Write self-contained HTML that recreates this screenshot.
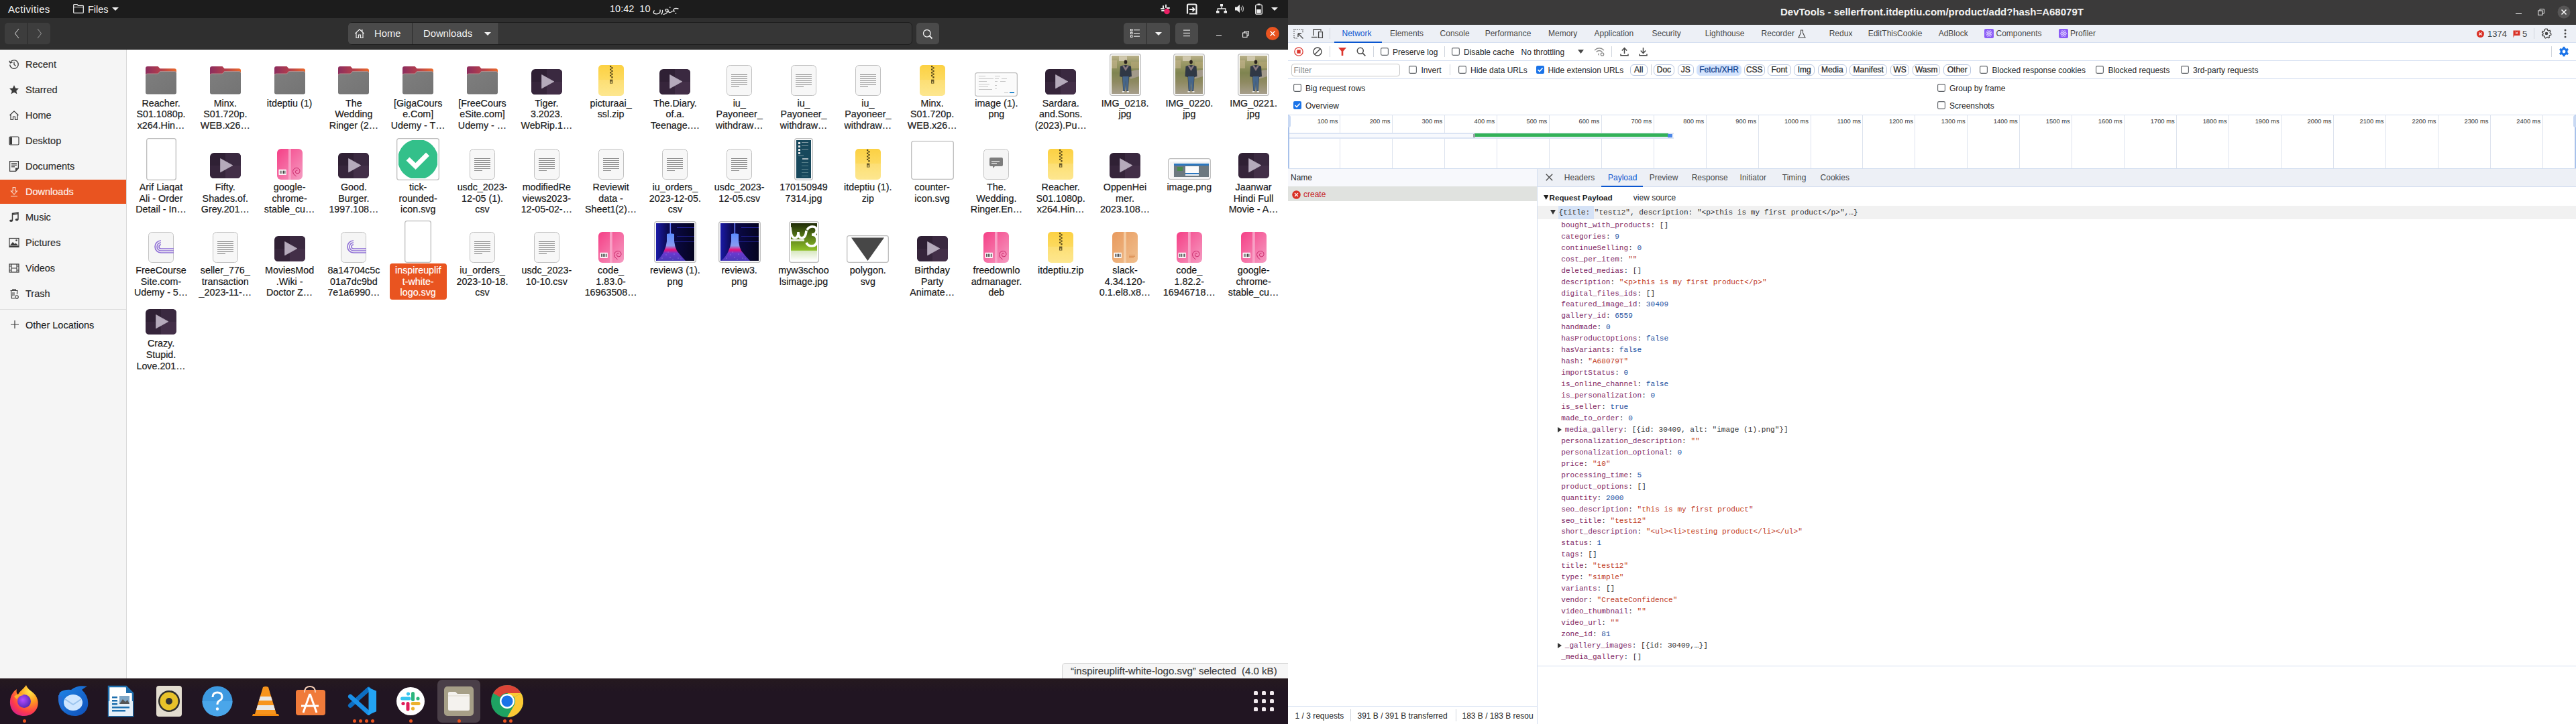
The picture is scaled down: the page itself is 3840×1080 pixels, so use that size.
<!DOCTYPE html><html><head><meta charset="utf-8"><style>
*{margin:0;padding:0}
html,body{width:3840px;height:1080px;overflow:hidden;background:#fff;position:relative}
body{font-family:"Liberation Sans",sans-serif}
.ic{position:absolute;line-height:0}
.ic svg{display:block}
.lb{position:absolute;width:90px;text-align:center;font-size:14.3px;line-height:16.8px;color:#1a1a1a;white-space:nowrap;-webkit-text-stroke:0.2px #1a1a1a}
.lb.sel{-webkit-text-stroke:0.2px #fff}
.lb.sel{color:#fff}
.sbt{position:absolute;font-size:14.5px;line-height:18px;color:#1e1e1e;white-space:nowrap;-webkit-text-stroke:0.15px currentColor}
.tb{position:absolute;font-size:14.5px;line-height:18px;color:#f4f4f4;white-space:nowrap}
.hbt{position:absolute;font-size:14.8px;line-height:18px;color:#f0f0f0;white-space:nowrap}
.hbtn{position:absolute;background:#3d3d3d;border-radius:5px}
.ttl{position:absolute;font-size:15px;font-weight:bold;line-height:18px;color:#f2f2f2;white-space:nowrap}
.dt{position:absolute;font-size:12px;line-height:16px;color:#1f1f1f;white-space:nowrap}
.dtab{position:absolute;font-size:12px;line-height:16px;color:#474747;white-space:nowrap}
.dtb{position:absolute;font-size:11.7px;font-weight:bold;line-height:16px;color:#1f1f1f;white-space:nowrap}
.tml{position:absolute;width:60px;text-align:right;font-size:9.4px;line-height:12px;color:#333;white-space:nowrap}
.chip{position:absolute;top:95.5px;height:17px;box-sizing:border-box;border:1px solid #b8c6e0;border-radius:6px;font-size:12px;line-height:15px;text-align:center;color:#1f1f1f;-webkit-text-stroke:0.25px currentColor}
.mono{position:absolute;font-family:"Liberation Mono",monospace;font-size:11.1px;line-height:17px;white-space:pre;color:#303030}
</style></head><body>
<div style="position:absolute;left:189px;top:74px;width:1731px;height:938px;background:#fff"></div>
<div style="position:absolute;left:0;top:74px;width:188px;height:938px;background:#f5f5f5"></div>
<div style="position:absolute;left:188px;top:74px;width:1px;height:938px;background:#d8d8d8"></div>
<div style="position:absolute;left:581px;top:393px;width:84.5px;height:53.6px;background:#e95420;border-radius:4px"></div>
<div class="ic" style="left:13px;top:88px"><svg width="16" height="16" viewBox="0 0 16 16"><path d="M2.2 5.5 A6.3 6.3 0 1 1 1.7 8.5" fill="none" stroke="#3b3b3b" stroke-width="1.3"/><path d="M0.8 2.8 L2.4 6 L5.6 4.8" fill="none" stroke="#3b3b3b" stroke-width="1.3"/><path d="M8 4.2 V8.3 L10.5 10.5" fill="none" stroke="#3b3b3b" stroke-width="1.3"/></svg></div>
<div class="sbt" style="left:38px;top:87px;color:#2b2b2b">Recent</div>
<div class="ic" style="left:13px;top:126px"><svg width="16" height="16" viewBox="0 0 16 16"><path d="M8 1 L10.1 5.6 L15 6.1 L11.3 9.4 L12.4 14.3 L8 11.8 L3.6 14.3 L4.7 9.4 L1 6.1 L5.9 5.6Z" fill="#3b3b3b"/></svg></div>
<div class="sbt" style="left:38px;top:125px;color:#2b2b2b">Starred</div>
<div class="ic" style="left:13px;top:164px"><svg width="16" height="16" viewBox="0 0 16 16"><path d="M1.5 8 L8 1.8 L14.5 8 M3 6.8 V14.5 H6.5 V10 H9.5 V14.5 H13 V6.8" fill="none" stroke="#3b3b3b" stroke-width="1.2"/></svg></div>
<div class="sbt" style="left:38px;top:163px;color:#2b2b2b">Home</div>
<div class="ic" style="left:13px;top:202px"><svg width="16" height="16" viewBox="0 0 16 16"><rect x="1" y="2" width="14" height="12" rx="1.5" fill="none" stroke="#3b3b3b" stroke-width="1.2"/><rect x="1.5" y="2.5" width="3.5" height="11" fill="#3b3b3b"/></svg></div>
<div class="sbt" style="left:38px;top:201px;color:#2b2b2b">Desktop</div>
<div class="ic" style="left:13px;top:240px"><svg width="16" height="16" viewBox="0 0 16 16"><path d="M1.6 0.6 H14.4 V11 L10.6 15.4 H1.6Z" fill="none" stroke="#3b3b3b" stroke-width="1.2"/><path d="M10 15.4 V10.5 H14.4Z" fill="#3b3b3b"/><g fill="#3b3b3b"><rect x="4" y="3" width="8" height="1.2"/><rect x="4" y="5.6" width="8" height="1.2"/><rect x="4" y="8.2" width="5" height="1.2"/></g></svg></div>
<div class="sbt" style="left:38px;top:239px;color:#2b2b2b">Documents</div>
<div style="position:absolute;left:0;top:268px;width:188px;height:36px;background:#e95420"></div>
<div class="ic" style="left:13px;top:278px"><svg width="16" height="16" viewBox="0 0 16 16"><path d="M6.2 1.5 H9.8 V7 H12.5 L8 12 L3.5 7 H6.2Z" fill="none" stroke="#f9e0d3" stroke-width="1.1"/><rect x="3" y="14" width="10" height="1.1" fill="#f9e0d3"/></svg></div>
<div class="sbt" style="left:38px;top:277px;color:#fdf1ea">Downloads</div>
<div class="ic" style="left:13px;top:316px"><svg width="16" height="16" viewBox="0 0 16 16"><path d="M5.5 13 V2.5 L14 1.2 V11.5" fill="none" stroke="#3b3b3b" stroke-width="1.5"/><ellipse cx="3.6" cy="13.2" rx="2.4" ry="1.8" fill="#3b3b3b"/><ellipse cx="12.1" cy="11.8" rx="2.4" ry="1.8" fill="#3b3b3b"/><path d="M5.5 4 L14 2.7" stroke="#3b3b3b" stroke-width="1.5"/></svg></div>
<div class="sbt" style="left:38px;top:315px;color:#2b2b2b">Music</div>
<div class="ic" style="left:13px;top:354px"><svg width="16" height="16" viewBox="0 0 16 16"><rect x="1" y="1.5" width="14" height="13" fill="none" stroke="#3b3b3b" stroke-width="1.2"/><path d="M2 12 L6 7 L9 10 L10.5 8.5 L14 12Z" fill="#3b3b3b"/><circle cx="11.5" cy="4.5" r="1.3" fill="#3b3b3b"/><rect x="1" y="12.5" width="14" height="2.3" fill="#3b3b3b"/></svg></div>
<div class="sbt" style="left:38px;top:353px;color:#2b2b2b">Pictures</div>
<div class="ic" style="left:13px;top:392px"><svg width="16" height="16" viewBox="0 0 16 16"><rect x="1" y="2" width="14" height="12" fill="none" stroke="#3b3b3b" stroke-width="1.2"/><path d="M4 2 V14 M12 2 V14 M4 8 H12" stroke="#3b3b3b" stroke-width="1.1"/><g fill="#3b3b3b"><rect x="1" y="4.5" width="3" height="1"/><rect x="1" y="10.5" width="3" height="1"/><rect x="12" y="4.5" width="3" height="1"/><rect x="12" y="10.5" width="3" height="1"/></g></svg></div>
<div class="sbt" style="left:38px;top:391px;color:#2b2b2b">Videos</div>
<div class="ic" style="left:13px;top:430px"><svg width="16" height="16" viewBox="0 0 16 16"><path d="M2.5 3.5 H13.5 M6 3.5 V1.5 H10 V3.5 M3.5 3.5 L4.3 15 H9" fill="none" stroke="#3b3b3b" stroke-width="1.2"/><path d="M12.7 3.5 L12.4 9" stroke="#3b3b3b" stroke-width="1.2"/><path d="M6 6 V12 M8 6 V11" stroke="#3b3b3b" stroke-width="1"/><circle cx="12" cy="13" r="2.3" fill="none" stroke="#3b3b3b" stroke-width="1.1"/></svg></div>
<div class="sbt" style="left:38px;top:429px;color:#2b2b2b">Trash</div>
<div style="position:absolute;left:0;top:461px;width:188px;height:1px;background:#dcdcdc"></div>
<div class="ic" style="left:15px;top:477px"><svg width="14" height="14" viewBox="0 0 14 14"><path d="M7 1 V13 M1 7 H13" stroke="#3b3b3b" stroke-width="1.2"/></svg></div>
<div class="sbt" style="left:38px;top:476px">Other Locations</div>
<div class="ic" style="left:217px;top:99px"><svg width="46" height="42" viewBox="0 0 46 42"><defs>
<linearGradient id="ftab" x1="0" y1="0" x2="1" y2="0"><stop offset="0" stop-color="#8c2d5e"/><stop offset="0.5" stop-color="#b63f4c"/><stop offset="1" stop-color="#ea6a2c"/></linearGradient>
<linearGradient id="fbody" x1="0" y1="0" x2="1" y2="1"><stop offset="0" stop-color="#7e7e7e"/><stop offset="1" stop-color="#747474"/></linearGradient></defs>
<path d="M0 3 Q0 0 3 0 H18.5 L21.5 3.3 H43 Q46 3.3 46 6.3 V20 H0Z" fill="url(#ftab)"/>
<path d="M0 13.3 Q0 10.8 2.5 10.8 H18.5 L21.5 7.3 H43.5 Q46 7.3 46 9.8 V38.8 Q46 41.5 43.3 41.5 H2.7 Q0 41.5 0 38.8Z" fill="url(#fbody)"/>
<path d="M0.3 13.3 Q0.3 11 2.5 11 H18.5 L21.5 7.5 H43.5 Q45.7 7.5 45.7 9.8" fill="none" stroke="#d7a0a0" stroke-width="0.7" opacity="0.8"/>
</svg></div>
<div class="lb" style="left:195.0px;top:145.7px">Reacher.<br>S01.1080p.<br>x264.Hin…</div>
<div class="ic" style="left:313px;top:99px"><svg width="46" height="42" viewBox="0 0 46 42"><defs>
<linearGradient id="ftab" x1="0" y1="0" x2="1" y2="0"><stop offset="0" stop-color="#8c2d5e"/><stop offset="0.5" stop-color="#b63f4c"/><stop offset="1" stop-color="#ea6a2c"/></linearGradient>
<linearGradient id="fbody" x1="0" y1="0" x2="1" y2="1"><stop offset="0" stop-color="#7e7e7e"/><stop offset="1" stop-color="#747474"/></linearGradient></defs>
<path d="M0 3 Q0 0 3 0 H18.5 L21.5 3.3 H43 Q46 3.3 46 6.3 V20 H0Z" fill="url(#ftab)"/>
<path d="M0 13.3 Q0 10.8 2.5 10.8 H18.5 L21.5 7.3 H43.5 Q46 7.3 46 9.8 V38.8 Q46 41.5 43.3 41.5 H2.7 Q0 41.5 0 38.8Z" fill="url(#fbody)"/>
<path d="M0.3 13.3 Q0.3 11 2.5 11 H18.5 L21.5 7.5 H43.5 Q45.7 7.5 45.7 9.8" fill="none" stroke="#d7a0a0" stroke-width="0.7" opacity="0.8"/>
</svg></div>
<div class="lb" style="left:290.8px;top:145.7px">Minx.<br>S01.720p.<br>WEB.x26…</div>
<div class="ic" style="left:409px;top:99px"><svg width="46" height="42" viewBox="0 0 46 42"><defs>
<linearGradient id="ftab" x1="0" y1="0" x2="1" y2="0"><stop offset="0" stop-color="#8c2d5e"/><stop offset="0.5" stop-color="#b63f4c"/><stop offset="1" stop-color="#ea6a2c"/></linearGradient>
<linearGradient id="fbody" x1="0" y1="0" x2="1" y2="1"><stop offset="0" stop-color="#7e7e7e"/><stop offset="1" stop-color="#747474"/></linearGradient></defs>
<path d="M0 3 Q0 0 3 0 H18.5 L21.5 3.3 H43 Q46 3.3 46 6.3 V20 H0Z" fill="url(#ftab)"/>
<path d="M0 13.3 Q0 10.8 2.5 10.8 H18.5 L21.5 7.3 H43.5 Q46 7.3 46 9.8 V38.8 Q46 41.5 43.3 41.5 H2.7 Q0 41.5 0 38.8Z" fill="url(#fbody)"/>
<path d="M0.3 13.3 Q0.3 11 2.5 11 H18.5 L21.5 7.5 H43.5 Q45.7 7.5 45.7 9.8" fill="none" stroke="#d7a0a0" stroke-width="0.7" opacity="0.8"/>
</svg></div>
<div class="lb" style="left:386.6px;top:145.7px">itdeptiu (1)</div>
<div class="ic" style="left:504px;top:99px"><svg width="46" height="42" viewBox="0 0 46 42"><defs>
<linearGradient id="ftab" x1="0" y1="0" x2="1" y2="0"><stop offset="0" stop-color="#8c2d5e"/><stop offset="0.5" stop-color="#b63f4c"/><stop offset="1" stop-color="#ea6a2c"/></linearGradient>
<linearGradient id="fbody" x1="0" y1="0" x2="1" y2="1"><stop offset="0" stop-color="#7e7e7e"/><stop offset="1" stop-color="#747474"/></linearGradient></defs>
<path d="M0 3 Q0 0 3 0 H18.5 L21.5 3.3 H43 Q46 3.3 46 6.3 V20 H0Z" fill="url(#ftab)"/>
<path d="M0 13.3 Q0 10.8 2.5 10.8 H18.5 L21.5 7.3 H43.5 Q46 7.3 46 9.8 V38.8 Q46 41.5 43.3 41.5 H2.7 Q0 41.5 0 38.8Z" fill="url(#fbody)"/>
<path d="M0.3 13.3 Q0.3 11 2.5 11 H18.5 L21.5 7.5 H43.5 Q45.7 7.5 45.7 9.8" fill="none" stroke="#d7a0a0" stroke-width="0.7" opacity="0.8"/>
</svg></div>
<div class="lb" style="left:482.4px;top:145.7px">The<br>Wedding<br>Ringer (2…</div>
<div class="ic" style="left:600px;top:99px"><svg width="46" height="42" viewBox="0 0 46 42"><defs>
<linearGradient id="ftab" x1="0" y1="0" x2="1" y2="0"><stop offset="0" stop-color="#8c2d5e"/><stop offset="0.5" stop-color="#b63f4c"/><stop offset="1" stop-color="#ea6a2c"/></linearGradient>
<linearGradient id="fbody" x1="0" y1="0" x2="1" y2="1"><stop offset="0" stop-color="#7e7e7e"/><stop offset="1" stop-color="#747474"/></linearGradient></defs>
<path d="M0 3 Q0 0 3 0 H18.5 L21.5 3.3 H43 Q46 3.3 46 6.3 V20 H0Z" fill="url(#ftab)"/>
<path d="M0 13.3 Q0 10.8 2.5 10.8 H18.5 L21.5 7.3 H43.5 Q46 7.3 46 9.8 V38.8 Q46 41.5 43.3 41.5 H2.7 Q0 41.5 0 38.8Z" fill="url(#fbody)"/>
<path d="M0.3 13.3 Q0.3 11 2.5 11 H18.5 L21.5 7.5 H43.5 Q45.7 7.5 45.7 9.8" fill="none" stroke="#d7a0a0" stroke-width="0.7" opacity="0.8"/>
</svg></div>
<div class="lb" style="left:578.2px;top:145.7px">[GigaCours<br>e.Com]<br>Udemy - T…</div>
<div class="ic" style="left:696px;top:99px"><svg width="46" height="42" viewBox="0 0 46 42"><defs>
<linearGradient id="ftab" x1="0" y1="0" x2="1" y2="0"><stop offset="0" stop-color="#8c2d5e"/><stop offset="0.5" stop-color="#b63f4c"/><stop offset="1" stop-color="#ea6a2c"/></linearGradient>
<linearGradient id="fbody" x1="0" y1="0" x2="1" y2="1"><stop offset="0" stop-color="#7e7e7e"/><stop offset="1" stop-color="#747474"/></linearGradient></defs>
<path d="M0 3 Q0 0 3 0 H18.5 L21.5 3.3 H43 Q46 3.3 46 6.3 V20 H0Z" fill="url(#ftab)"/>
<path d="M0 13.3 Q0 10.8 2.5 10.8 H18.5 L21.5 7.3 H43.5 Q46 7.3 46 9.8 V38.8 Q46 41.5 43.3 41.5 H2.7 Q0 41.5 0 38.8Z" fill="url(#fbody)"/>
<path d="M0.3 13.3 Q0.3 11 2.5 11 H18.5 L21.5 7.5 H43.5 Q45.7 7.5 45.7 9.8" fill="none" stroke="#d7a0a0" stroke-width="0.7" opacity="0.8"/>
</svg></div>
<div class="lb" style="left:674.0px;top:145.7px">[FreeCours<br>eSite.com]<br>Udemy - …</div>
<div class="ic" style="left:792px;top:103px"><svg width="46" height="38" viewBox="0 0 46 38">
<rect x="0" y="0" width="46" height="38" rx="6" fill="#2f2034"/>
<path d="M23 0 H40 Q46 0 46 6 V19 H23Z" fill="#3a2940"/>
<path d="M0 19 H23 V38 H6 Q0 38 0 32Z" fill="#36253b"/>
<path d="M23 19 H46 V32 Q46 38 40 38 H23Z" fill="#432f48"/>
<path d="M15.6 8.6 L33.8 18.7 L15.6 28.8Z" fill="#b5aabb" stroke="#b5aabb" stroke-width="0.8" stroke-linejoin="round"/>
</svg></div>
<div class="lb" style="left:769.8px;top:145.7px">Tiger.<br>3.2023.<br>WebRip.1…</div>
<div class="ic" style="left:892px;top:97px"><svg width="38" height="46" viewBox="0 0 38 46"><defs>
<linearGradient id="zg" x1="0" y1="0" x2="0" y2="1"><stop offset="0" stop-color="#fcd143"/><stop offset="1" stop-color="#fde47f"/></linearGradient></defs>
<rect x="0" y="0" width="38" height="46" rx="5" fill="url(#zg)"/>
<rect x="0" y="22" width="38" height="24" rx="0" fill="#ffffff" opacity="0.13"/>
<path d="M17 1 h2.3 v2.3 h-2.3z M19.3 3.3 h2.3 v2.3 h-2.3z M17 5.6 h2.3 v2.3 h-2.3z M19.3 7.9 h2.3 v2.3 h-2.3z M17 10.2 h2.3 v2.3 h-2.3z M19.3 12.5 h2.3 v2.3 h-2.3z M17 14.8 h2.3 v2.3 h-2.3z M19.3 17.1 h2.3 v2.3 h-2.3z" fill="#5a4a1a"/>
<rect x="17" y="21.6" width="4.4" height="6" fill="#6a5a2a"/>
<rect x="18.2" y="24.6" width="2" height="2" fill="#fde47f"/>
</svg></div>
<div class="lb" style="left:865.6px;top:145.7px">picturaai_<br>ssl.zip</div>
<div class="ic" style="left:983px;top:103px"><svg width="46" height="38" viewBox="0 0 46 38">
<rect x="0" y="0" width="46" height="38" rx="6" fill="#2f2034"/>
<path d="M23 0 H40 Q46 0 46 6 V19 H23Z" fill="#3a2940"/>
<path d="M0 19 H23 V38 H6 Q0 38 0 32Z" fill="#36253b"/>
<path d="M23 19 H46 V32 Q46 38 40 38 H23Z" fill="#432f48"/>
<path d="M15.6 8.6 L33.8 18.7 L15.6 28.8Z" fill="#b5aabb" stroke="#b5aabb" stroke-width="0.8" stroke-linejoin="round"/>
</svg></div>
<div class="lb" style="left:961.4px;top:145.7px">The.Diary.<br>of.a.<br>Teenage.…</div>
<div class="ic" style="left:1083px;top:97px"><svg width="38" height="46" viewBox="0 0 38 46">
<rect x="0.5" y="0.5" width="37" height="45" rx="5" fill="#f7f7f7" stroke="#c0c0c0"/>
<rect x="7" y="14" width="24" height="1" fill="#8c8c8c"/><rect x="7" y="17" width="24" height="1" fill="#8c8c8c"/><rect x="7" y="20" width="24" height="1" fill="#8c8c8c"/><rect x="7" y="23" width="24" height="1" fill="#8c8c8c"/><rect x="7" y="26" width="24" height="1" fill="#8c8c8c"/><rect x="7" y="29" width="24" height="1" fill="#8c8c8c"/><rect x="7" y="32" width="12" height="1" fill="#8c8c8c"/>
</svg></div>
<div class="lb" style="left:1057.2px;top:145.7px">iu_<br>Payoneer_<br>withdraw…</div>
<div class="ic" style="left:1179px;top:97px"><svg width="38" height="46" viewBox="0 0 38 46">
<rect x="0.5" y="0.5" width="37" height="45" rx="5" fill="#f7f7f7" stroke="#c0c0c0"/>
<rect x="7" y="14" width="24" height="1" fill="#8c8c8c"/><rect x="7" y="17" width="24" height="1" fill="#8c8c8c"/><rect x="7" y="20" width="24" height="1" fill="#8c8c8c"/><rect x="7" y="23" width="24" height="1" fill="#8c8c8c"/><rect x="7" y="26" width="24" height="1" fill="#8c8c8c"/><rect x="7" y="29" width="24" height="1" fill="#8c8c8c"/><rect x="7" y="32" width="12" height="1" fill="#8c8c8c"/>
</svg></div>
<div class="lb" style="left:1153.0px;top:145.7px">iu_<br>Payoneer_<br>withdraw…</div>
<div class="ic" style="left:1275px;top:97px"><svg width="38" height="46" viewBox="0 0 38 46">
<rect x="0.5" y="0.5" width="37" height="45" rx="5" fill="#f7f7f7" stroke="#c0c0c0"/>
<rect x="7" y="14" width="24" height="1" fill="#8c8c8c"/><rect x="7" y="17" width="24" height="1" fill="#8c8c8c"/><rect x="7" y="20" width="24" height="1" fill="#8c8c8c"/><rect x="7" y="23" width="24" height="1" fill="#8c8c8c"/><rect x="7" y="26" width="24" height="1" fill="#8c8c8c"/><rect x="7" y="29" width="24" height="1" fill="#8c8c8c"/><rect x="7" y="32" width="12" height="1" fill="#8c8c8c"/>
</svg></div>
<div class="lb" style="left:1248.8px;top:145.7px">iu_<br>Payoneer_<br>withdraw…</div>
<div class="ic" style="left:1371px;top:97px"><svg width="38" height="46" viewBox="0 0 38 46"><defs>
<linearGradient id="zg" x1="0" y1="0" x2="0" y2="1"><stop offset="0" stop-color="#fcd143"/><stop offset="1" stop-color="#fde47f"/></linearGradient></defs>
<rect x="0" y="0" width="38" height="46" rx="5" fill="url(#zg)"/>
<rect x="0" y="22" width="38" height="24" rx="0" fill="#ffffff" opacity="0.13"/>
<path d="M17 1 h2.3 v2.3 h-2.3z M19.3 3.3 h2.3 v2.3 h-2.3z M17 5.6 h2.3 v2.3 h-2.3z M19.3 7.9 h2.3 v2.3 h-2.3z M17 10.2 h2.3 v2.3 h-2.3z M19.3 12.5 h2.3 v2.3 h-2.3z M17 14.8 h2.3 v2.3 h-2.3z M19.3 17.1 h2.3 v2.3 h-2.3z" fill="#5a4a1a"/>
<rect x="17" y="21.6" width="4.4" height="6" fill="#6a5a2a"/>
<rect x="18.2" y="24.6" width="2" height="2" fill="#fde47f"/>
</svg></div>
<div class="lb" style="left:1344.6px;top:145.7px">Minx.<br>S01.720p.<br>WEB.x26…</div>
<div class="ic" style="left:1453px;top:108px"><svg width="64" height="36" viewBox="0 0 64 36"><rect x="0.7" y="0.7" width="62.6" height="34.6" rx="3" fill="#fff" stroke="#bdbdbd" stroke-width="1.3"/><rect x="3" y="3" width="58" height="30" fill="#fafafa"/>
<g fill="#c8c8c8"><rect x="6" y="5" width="10" height="1"/><rect x="30" y="5" width="8" height="1"/>
<rect x="6" y="9" width="22" height="1"/><rect x="30" y="9" width="6" height="1"/><rect x="40" y="9" width="8" height="1"/>
<rect x="6" y="13" width="12" height="1"/><rect x="30" y="13" width="4" height="1"/><rect x="38" y="13" width="8" height="1"/>
<rect x="6" y="17" width="16" height="1"/><rect x="30" y="19" width="3" height="1"/>
<rect x="6" y="21" width="14" height="1"/><rect x="30" y="23" width="3" height="1"/><rect x="6" y="25" width="20" height="1"/></g>
<rect x="44" y="29" width="6" height="2" fill="#ddd"/><rect x="52" y="29" width="7" height="2" fill="#2a8cd0"/>
</svg></div>
<div class="lb" style="left:1440.4px;top:145.7px">image (1).<br>png</div>
<div class="ic" style="left:1558px;top:103px"><svg width="46" height="38" viewBox="0 0 46 38">
<rect x="0" y="0" width="46" height="38" rx="6" fill="#2f2034"/>
<path d="M23 0 H40 Q46 0 46 6 V19 H23Z" fill="#3a2940"/>
<path d="M0 19 H23 V38 H6 Q0 38 0 32Z" fill="#36253b"/>
<path d="M23 19 H46 V32 Q46 38 40 38 H23Z" fill="#432f48"/>
<path d="M15.6 8.6 L33.8 18.7 L15.6 28.8Z" fill="#b5aabb" stroke="#b5aabb" stroke-width="0.8" stroke-linejoin="round"/>
</svg></div>
<div class="lb" style="left:1536.2px;top:145.7px">Sardara.<br>and.Sons.<br>(2023).Pu…</div>
<div class="ic" style="left:1654px;top:80px"><svg width="47" height="63" viewBox="0 0 47 63"><rect x="0.7" y="0.7" width="45.6" height="61.6" rx="3" fill="#fff" stroke="#bdbdbd" stroke-width="1.3"/><defs><linearGradient id="pg0" x1="0" y1="0" x2="0" y2="1"><stop offset="0" stop-color="#b9b08a"/><stop offset="0.18" stop-color="#9c9a68"/><stop offset="0.45" stop-color="#7f8450"/><stop offset="0.7" stop-color="#8f8a62"/><stop offset="1" stop-color="#a79f8c"/></linearGradient></defs>
<rect x="3" y="3" width="41" height="57" fill="url(#pg0)"/>
<rect x="14" y="4" width="12" height="7" fill="#d9d2bc" opacity="0.75"/>
<rect x="3" y="10" width="8" height="12" fill="#c7b68e" opacity="0.6"/>
<rect x="32" y="12" width="12" height="10" fill="#b8a878" opacity="0.6"/>
<path d="M30 27 Q38 24 44 24 L44 34 Q37 36 31 38Z" fill="#a39a8a"/>
<ellipse cx="24" cy="12.5" rx="2.3" ry="3" fill="#2a221e"/>
<path d="M16 19 Q24 15 32 19 L33 34 L29 35 L28 52 L27.5 56 L25 56 L24 38 L23 56 L20.5 56 L20 52 L19 35 L15 34Z" fill="#303845"/>
<path d="M19.5 34 H28.5 L27.5 55 H25 L24 40 L23 55 H20.5Z" fill="#46668a"/>
<path d="M19 18 L24 26 L29 18 L27 17 L24 21 L21 17Z" fill="#8a7a80"/>
<rect x="19" y="56" width="3" height="1.6" fill="#e8e8e8"/><rect x="26" y="56" width="3" height="1.6" fill="#e8e8e8"/>
</svg></div>
<div class="lb" style="left:1632.0px;top:145.7px">IMG_0218.<br>jpg</div>
<div class="ic" style="left:1749px;top:80px"><svg width="47" height="63" viewBox="0 0 47 63"><rect x="0.7" y="0.7" width="45.6" height="61.6" rx="3" fill="#fff" stroke="#bdbdbd" stroke-width="1.3"/><defs><linearGradient id="pg1" x1="0" y1="0" x2="0" y2="1"><stop offset="0" stop-color="#b9b08a"/><stop offset="0.18" stop-color="#9c9a68"/><stop offset="0.45" stop-color="#7f8450"/><stop offset="0.7" stop-color="#8f8a62"/><stop offset="1" stop-color="#a79f8c"/></linearGradient></defs>
<rect x="3" y="3" width="41" height="57" fill="url(#pg1)"/>
<rect x="14" y="4" width="12" height="7" fill="#d9d2bc" opacity="0.75"/>
<rect x="3" y="10" width="8" height="12" fill="#c7b68e" opacity="0.6"/>
<rect x="32" y="12" width="12" height="10" fill="#b8a878" opacity="0.6"/>
<path d="M30 27 Q38 24 44 24 L44 34 Q37 36 31 38Z" fill="#a39a8a"/>
<ellipse cx="26.5" cy="12.5" rx="2.3" ry="3" fill="#2a221e"/>
<path d="M18.5 19 Q26.5 15 34.5 19 L35.5 34 L31.5 35 L30.5 52 L30.0 56 L27.5 56 L26.5 38 L25.5 56 L23.0 56 L22.5 52 L21.5 35 L17.5 34Z" fill="#303845"/>
<path d="M22.0 34 H31.0 L30.0 55 H27.5 L26.5 40 L25.5 55 H23.0Z" fill="#46668a"/>
<path d="M21.5 18 L26.5 26 L31.5 18 L29.5 17 L26.5 21 L23.5 17Z" fill="#8a7a80"/>
<rect x="21.5" y="56" width="3" height="1.6" fill="#e8e8e8"/><rect x="28.5" y="56" width="3" height="1.6" fill="#e8e8e8"/>
</svg></div>
<div class="lb" style="left:1727.8px;top:145.7px">IMG_0220.<br>jpg</div>
<div class="ic" style="left:1845px;top:80px"><svg width="47" height="63" viewBox="0 0 47 63"><rect x="0.7" y="0.7" width="45.6" height="61.6" rx="3" fill="#fff" stroke="#bdbdbd" stroke-width="1.3"/><defs><linearGradient id="pg2" x1="0" y1="0" x2="0" y2="1"><stop offset="0" stop-color="#b9b08a"/><stop offset="0.18" stop-color="#9c9a68"/><stop offset="0.45" stop-color="#7f8450"/><stop offset="0.7" stop-color="#8f8a62"/><stop offset="1" stop-color="#a79f8c"/></linearGradient></defs>
<rect x="3" y="3" width="41" height="57" fill="url(#pg2)"/>
<rect x="14" y="4" width="12" height="7" fill="#d9d2bc" opacity="0.75"/>
<rect x="3" y="10" width="8" height="12" fill="#c7b68e" opacity="0.6"/>
<rect x="32" y="12" width="12" height="10" fill="#b8a878" opacity="0.6"/>
<path d="M30 27 Q38 24 44 24 L44 34 Q37 36 31 38Z" fill="#a39a8a"/>
<ellipse cx="27" cy="12.5" rx="2.3" ry="3" fill="#2a221e"/>
<path d="M19 19 Q27 15 35 19 L36 34 L32 35 L31 52 L30.5 56 L28 56 L27 38 L26 56 L23.5 56 L23 52 L22 35 L18 34Z" fill="#303845"/>
<path d="M22.5 34 H31.5 L30.5 55 H28 L27 40 L26 55 H23.5Z" fill="#46668a"/>
<path d="M22 18 L27 26 L32 18 L30 17 L27 21 L24 17Z" fill="#8a7a80"/>
<rect x="22" y="56" width="3" height="1.6" fill="#e8e8e8"/><rect x="29" y="56" width="3" height="1.6" fill="#e8e8e8"/>
</svg></div>
<div class="lb" style="left:1823.6px;top:145.7px">IMG_0221.<br>jpg</div>
<div class="ic" style="left:218px;top:206px"><svg width="45" height="63" viewBox="0 0 45 63"><rect x="0.7" y="0.7" width="43.6" height="61.6" rx="3" fill="#fff" stroke="#bdbdbd" stroke-width="1.3"/></svg></div>
<div class="lb" style="left:195.0px;top:270.9px">Arif Liaqat<br>Ali - Order<br>Detail - In…</div>
<div class="ic" style="left:313px;top:228px"><svg width="46" height="38" viewBox="0 0 46 38">
<rect x="0" y="0" width="46" height="38" rx="6" fill="#2f2034"/>
<path d="M23 0 H40 Q46 0 46 6 V19 H23Z" fill="#3a2940"/>
<path d="M0 19 H23 V38 H6 Q0 38 0 32Z" fill="#36253b"/>
<path d="M23 19 H46 V32 Q46 38 40 38 H23Z" fill="#432f48"/>
<path d="M15.6 8.6 L33.8 18.7 L15.6 28.8Z" fill="#b5aabb" stroke="#b5aabb" stroke-width="0.8" stroke-linejoin="round"/>
</svg></div>
<div class="lb" style="left:290.8px;top:270.9px">Fifty.<br>Shades.of.<br>Grey.201…</div>
<div class="ic" style="left:413px;top:222px"><svg width="38" height="46" viewBox="0 0 38 46"><defs>
<linearGradient id="dgf53f86" x1="0" y1="0" x2="1" y2="1"><stop offset="0" stop-color="#f53f86"/><stop offset="1" stop-color="#f59cc2"/></linearGradient></defs>
<rect x="0" y="0" width="38" height="46" rx="6" fill="url(#dgf53f86)"/>
<rect x="17" y="0" width="3.8" height="46" fill="#f8a6c9" opacity="0.9"/>
<rect x="2.5" y="30.8" width="11.3" height="8.1" fill="#fff"/>
<g fill="#333"><rect x="4.2" y="32.6" width="1.2" height="4.5"/><rect x="6.6" y="32.6" width="1.2" height="4.5"/><rect x="9" y="32.6" width="1.2" height="4.5"/><rect x="11.2" y="32.6" width="1.2" height="4.5"/></g>
<path d="M28.5 41 Q23 38 23.5 33.5 Q24.5 28.5 29.5 28.5 Q34 29 34 33.5 Q33.5 37 30 37 Q27 36.5 27.5 33.5 Q28 31.5 30.5 32" fill="none" stroke="#c8286a" stroke-width="1"/>
</svg></div>
<div class="lb" style="left:386.6px;top:270.9px">google-<br>chrome-<br>stable_cu…</div>
<div class="ic" style="left:504px;top:228px"><svg width="46" height="38" viewBox="0 0 46 38">
<rect x="0" y="0" width="46" height="38" rx="6" fill="#2f2034"/>
<path d="M23 0 H40 Q46 0 46 6 V19 H23Z" fill="#3a2940"/>
<path d="M0 19 H23 V38 H6 Q0 38 0 32Z" fill="#36253b"/>
<path d="M23 19 H46 V32 Q46 38 40 38 H23Z" fill="#432f48"/>
<path d="M15.6 8.6 L33.8 18.7 L15.6 28.8Z" fill="#b5aabb" stroke="#b5aabb" stroke-width="0.8" stroke-linejoin="round"/>
</svg></div>
<div class="lb" style="left:482.4px;top:270.9px">Good.<br>Burger.<br>1997.108…</div>
<div class="ic" style="left:591px;top:206px"><svg width="64" height="63" viewBox="0 0 64 63"><rect x="0.7" y="0.7" width="62.6" height="61.6" rx="3" fill="#fff" stroke="#bdbdbd" stroke-width="1.3"/><defs><clipPath id="tkc"><rect x="3" y="3" width="58" height="57"/></clipPath></defs><circle cx="32" cy="31.8" r="30" fill="#33c08a" clip-path="url(#tkc)"/>
<path d="M17 31 L28.5 42 L46.5 24" fill="none" stroke="#fff" stroke-width="7" stroke-linecap="butt"/>
</svg></div>
<div class="lb" style="left:578.2px;top:270.9px">tick-<br>rounded-<br>icon.svg</div>
<div class="ic" style="left:700px;top:222px"><svg width="38" height="46" viewBox="0 0 38 46">
<rect x="0.5" y="0.5" width="37" height="45" rx="5" fill="#f7f7f7" stroke="#c0c0c0"/>
<rect x="7" y="14" width="24" height="1" fill="#8c8c8c"/><rect x="7" y="17" width="24" height="1" fill="#8c8c8c"/><rect x="7" y="20" width="24" height="1" fill="#8c8c8c"/><rect x="7" y="23" width="24" height="1" fill="#8c8c8c"/><rect x="7" y="26" width="24" height="1" fill="#8c8c8c"/><rect x="7" y="29" width="24" height="1" fill="#8c8c8c"/><rect x="7" y="32" width="12" height="1" fill="#8c8c8c"/>
</svg></div>
<div class="lb" style="left:674.0px;top:270.9px">usdc_2023-<br>12-05 (1).<br>csv</div>
<div class="ic" style="left:796px;top:222px"><svg width="38" height="46" viewBox="0 0 38 46">
<rect x="0.5" y="0.5" width="37" height="45" rx="5" fill="#f7f7f7" stroke="#c0c0c0"/>
<rect x="7" y="14" width="24" height="1" fill="#8c8c8c"/><rect x="7" y="17" width="24" height="1" fill="#8c8c8c"/><rect x="7" y="20" width="24" height="1" fill="#8c8c8c"/><rect x="7" y="23" width="24" height="1" fill="#8c8c8c"/><rect x="7" y="26" width="24" height="1" fill="#8c8c8c"/><rect x="7" y="29" width="24" height="1" fill="#8c8c8c"/><rect x="7" y="32" width="12" height="1" fill="#8c8c8c"/>
</svg></div>
<div class="lb" style="left:769.8px;top:270.9px">modifiedRe<br>views2023-<br>12-05-02-…</div>
<div class="ic" style="left:892px;top:222px"><svg width="38" height="46" viewBox="0 0 38 46">
<rect x="0.5" y="0.5" width="37" height="45" rx="5" fill="#f7f7f7" stroke="#c0c0c0"/>
<rect x="7" y="14" width="24" height="1" fill="#8c8c8c"/><rect x="7" y="17" width="24" height="1" fill="#8c8c8c"/><rect x="7" y="20" width="24" height="1" fill="#8c8c8c"/><rect x="7" y="23" width="24" height="1" fill="#8c8c8c"/><rect x="7" y="26" width="24" height="1" fill="#8c8c8c"/><rect x="7" y="29" width="24" height="1" fill="#8c8c8c"/><rect x="7" y="32" width="12" height="1" fill="#8c8c8c"/>
</svg></div>
<div class="lb" style="left:865.6px;top:270.9px">Reviewit<br>data -<br>Sheet1(2)…</div>
<div class="ic" style="left:987px;top:222px"><svg width="38" height="46" viewBox="0 0 38 46">
<rect x="0.5" y="0.5" width="37" height="45" rx="5" fill="#f7f7f7" stroke="#c0c0c0"/>
<rect x="7" y="14" width="24" height="1" fill="#8c8c8c"/><rect x="7" y="17" width="24" height="1" fill="#8c8c8c"/><rect x="7" y="20" width="24" height="1" fill="#8c8c8c"/><rect x="7" y="23" width="24" height="1" fill="#8c8c8c"/><rect x="7" y="26" width="24" height="1" fill="#8c8c8c"/><rect x="7" y="29" width="24" height="1" fill="#8c8c8c"/><rect x="7" y="32" width="12" height="1" fill="#8c8c8c"/>
</svg></div>
<div class="lb" style="left:961.4px;top:270.9px">iu_orders_<br>2023-12-05.<br>csv</div>
<div class="ic" style="left:1083px;top:222px"><svg width="38" height="46" viewBox="0 0 38 46">
<rect x="0.5" y="0.5" width="37" height="45" rx="5" fill="#f7f7f7" stroke="#c0c0c0"/>
<rect x="7" y="14" width="24" height="1" fill="#8c8c8c"/><rect x="7" y="17" width="24" height="1" fill="#8c8c8c"/><rect x="7" y="20" width="24" height="1" fill="#8c8c8c"/><rect x="7" y="23" width="24" height="1" fill="#8c8c8c"/><rect x="7" y="26" width="24" height="1" fill="#8c8c8c"/><rect x="7" y="29" width="24" height="1" fill="#8c8c8c"/><rect x="7" y="32" width="12" height="1" fill="#8c8c8c"/>
</svg></div>
<div class="lb" style="left:1057.2px;top:270.9px">usdc_2023-<br>12-05.csv</div>
<div class="ic" style="left:1184px;top:206px"><svg width="28" height="63" viewBox="0 0 28 63"><rect x="0.7" y="0.7" width="26.6" height="61.6" rx="3" fill="#fff" stroke="#bdbdbd" stroke-width="1.3"/><rect x="3" y="3" width="22" height="57" fill="#17485c"/>
<g fill="#e8e8e8"><rect x="6" y="6" width="3" height="3"/><rect x="6" y="11" width="3" height="3"/><rect x="6" y="16" width="3" height="3"/><rect x="6" y="21" width="3" height="3"/>
<rect x="11" y="6" width="10" height="1" opacity="0.5"/><rect x="11" y="11" width="10" height="1" opacity="0.5"/><rect x="11" y="16" width="10" height="1" opacity="0.5"/>
<rect x="6" y="26" width="8" height="1" opacity="0.5"/><rect x="12" y="30" width="9" height="2" opacity="0.7"/></g>
<g fill="#9bb" opacity="0.5"><rect x="11" y="36" width="10" height="1"/><rect x="11" y="41" width="10" height="1"/><rect x="11" y="46" width="10" height="1"/><rect x="11" y="51" width="10" height="1"/><rect x="11" y="56" width="10" height="1"/></g>
</svg></div>
<div class="lb" style="left:1153.0px;top:270.9px">170150949<br>7314.jpg</div>
<div class="ic" style="left:1275px;top:222px"><svg width="38" height="46" viewBox="0 0 38 46"><defs>
<linearGradient id="zg" x1="0" y1="0" x2="0" y2="1"><stop offset="0" stop-color="#fcd143"/><stop offset="1" stop-color="#fde47f"/></linearGradient></defs>
<rect x="0" y="0" width="38" height="46" rx="5" fill="url(#zg)"/>
<rect x="0" y="22" width="38" height="24" rx="0" fill="#ffffff" opacity="0.13"/>
<path d="M17 1 h2.3 v2.3 h-2.3z M19.3 3.3 h2.3 v2.3 h-2.3z M17 5.6 h2.3 v2.3 h-2.3z M19.3 7.9 h2.3 v2.3 h-2.3z M17 10.2 h2.3 v2.3 h-2.3z M19.3 12.5 h2.3 v2.3 h-2.3z M17 14.8 h2.3 v2.3 h-2.3z M19.3 17.1 h2.3 v2.3 h-2.3z" fill="#5a4a1a"/>
<rect x="17" y="21.6" width="4.4" height="6" fill="#6a5a2a"/>
<rect x="18.2" y="24.6" width="2" height="2" fill="#fde47f"/>
</svg></div>
<div class="lb" style="left:1248.8px;top:270.9px">itdeptiu (1).<br>zip</div>
<div class="ic" style="left:1358px;top:210px"><svg width="64" height="58" viewBox="0 0 64 58"><rect x="0.7" y="0.7" width="62.6" height="56.6" rx="3" fill="#fff" stroke="#bdbdbd" stroke-width="1.3"/></svg></div>
<div class="lb" style="left:1344.6px;top:270.9px">counter-<br>icon.svg</div>
<div class="ic" style="left:1466px;top:222px"><svg width="38" height="46" viewBox="0 0 38 46">
<rect x="0.5" y="0.5" width="37" height="45" rx="5" fill="#f5f5f5" stroke="#c4c4c4"/>
<path d="M9 15 Q9 13 11 13 H27 Q29 13 29 15 V24 Q29 26 27 26 H17 L14 29 V26 H11 Q9 26 9 24Z" fill="#7d7d7d"/>
<rect x="12" y="18" width="12" height="1.2" fill="#eee"/><rect x="12" y="21" width="8" height="1.2" fill="#eee"/>
</svg></div>
<div class="lb" style="left:1440.4px;top:270.9px">The.<br>Wedding.<br>Ringer.En…</div>
<div class="ic" style="left:1562px;top:222px"><svg width="38" height="46" viewBox="0 0 38 46"><defs>
<linearGradient id="zg" x1="0" y1="0" x2="0" y2="1"><stop offset="0" stop-color="#fcd143"/><stop offset="1" stop-color="#fde47f"/></linearGradient></defs>
<rect x="0" y="0" width="38" height="46" rx="5" fill="url(#zg)"/>
<rect x="0" y="22" width="38" height="24" rx="0" fill="#ffffff" opacity="0.13"/>
<path d="M17 1 h2.3 v2.3 h-2.3z M19.3 3.3 h2.3 v2.3 h-2.3z M17 5.6 h2.3 v2.3 h-2.3z M19.3 7.9 h2.3 v2.3 h-2.3z M17 10.2 h2.3 v2.3 h-2.3z M19.3 12.5 h2.3 v2.3 h-2.3z M17 14.8 h2.3 v2.3 h-2.3z M19.3 17.1 h2.3 v2.3 h-2.3z" fill="#5a4a1a"/>
<rect x="17" y="21.6" width="4.4" height="6" fill="#6a5a2a"/>
<rect x="18.2" y="24.6" width="2" height="2" fill="#fde47f"/>
</svg></div>
<div class="lb" style="left:1536.2px;top:270.9px">Reacher.<br>S01.1080p.<br>x264.Hin…</div>
<div class="ic" style="left:1654px;top:228px"><svg width="46" height="38" viewBox="0 0 46 38">
<rect x="0" y="0" width="46" height="38" rx="6" fill="#2f2034"/>
<path d="M23 0 H40 Q46 0 46 6 V19 H23Z" fill="#3a2940"/>
<path d="M0 19 H23 V38 H6 Q0 38 0 32Z" fill="#36253b"/>
<path d="M23 19 H46 V32 Q46 38 40 38 H23Z" fill="#432f48"/>
<path d="M15.6 8.6 L33.8 18.7 L15.6 28.8Z" fill="#b5aabb" stroke="#b5aabb" stroke-width="0.8" stroke-linejoin="round"/>
</svg></div>
<div class="lb" style="left:1632.0px;top:270.9px">OppenHei<br>mer.<br>2023.108…</div>
<div class="ic" style="left:1741px;top:236px"><svg width="64" height="32" viewBox="0 0 64 32"><rect x="0.7" y="0.7" width="62.6" height="30.6" rx="3" fill="#fff" stroke="#bdbdbd" stroke-width="1.3"/><rect x="3" y="3" width="58" height="26" fill="#eef0f2"/>
<rect x="3" y="3" width="58" height="2" fill="#fff"/>
<rect x="9" y="8" width="52" height="3" fill="#2c78c0"/>
<rect x="3" y="5" width="5" height="24" fill="#f5f5f5"/>
<rect x="9" y="11" width="52" height="17" fill="#6c7880"/>
<rect x="26" y="12" width="20" height="14" fill="#fbfbfb"/>
<rect x="26" y="22" width="20" height="2" fill="#2c78c0"/>
<rect x="14" y="13" width="8" height="6" fill="#4a8a4a"/>
</svg></div>
<div class="lb" style="left:1727.8px;top:270.9px">image.png</div>
<div class="ic" style="left:1846px;top:228px"><svg width="46" height="38" viewBox="0 0 46 38">
<rect x="0" y="0" width="46" height="38" rx="6" fill="#2f2034"/>
<path d="M23 0 H40 Q46 0 46 6 V19 H23Z" fill="#3a2940"/>
<path d="M0 19 H23 V38 H6 Q0 38 0 32Z" fill="#36253b"/>
<path d="M23 19 H46 V32 Q46 38 40 38 H23Z" fill="#432f48"/>
<path d="M15.6 8.6 L33.8 18.7 L15.6 28.8Z" fill="#b5aabb" stroke="#b5aabb" stroke-width="0.8" stroke-linejoin="round"/>
</svg></div>
<div class="lb" style="left:1823.6px;top:270.9px">Jaanwar<br>Hindi Full<br>Movie - A…</div>
<div class="ic" style="left:221px;top:346px"><svg width="38" height="46" viewBox="0 0 38 46">
<rect x="0.5" y="0.5" width="37" height="45" rx="5" fill="#f5f5f5" stroke="#c4c4c4"/>
<g fill="none" stroke="#8f6fd6" stroke-width="1.6">
<path d="M38 31 H19 A9 9 0 0 1 19 13"/>
<path d="M38 28 H19 A6 6 0 0 1 19 16"/>
<path d="M38 25 H19 A3 3 0 0 1 19 19"/>
</g></svg></div>
<div class="lb" style="left:195.0px;top:394.9px">FreeCourse<br>Site.com-<br>Udemy - 5…</div>
<div class="ic" style="left:317px;top:346px"><svg width="38" height="46" viewBox="0 0 38 46">
<rect x="0.5" y="0.5" width="37" height="45" rx="5" fill="#f7f7f7" stroke="#c0c0c0"/>
<rect x="7" y="14" width="24" height="1" fill="#8c8c8c"/><rect x="7" y="17" width="24" height="1" fill="#8c8c8c"/><rect x="7" y="20" width="24" height="1" fill="#8c8c8c"/><rect x="7" y="23" width="24" height="1" fill="#8c8c8c"/><rect x="7" y="26" width="24" height="1" fill="#8c8c8c"/><rect x="7" y="29" width="24" height="1" fill="#8c8c8c"/><rect x="7" y="32" width="12" height="1" fill="#8c8c8c"/>
</svg></div>
<div class="lb" style="left:290.8px;top:394.9px">seller_776_<br>transaction<br>_2023-11-…</div>
<div class="ic" style="left:409px;top:352px"><svg width="46" height="38" viewBox="0 0 46 38">
<rect x="0" y="0" width="46" height="38" rx="6" fill="#2f2034"/>
<path d="M23 0 H40 Q46 0 46 6 V19 H23Z" fill="#3a2940"/>
<path d="M0 19 H23 V38 H6 Q0 38 0 32Z" fill="#36253b"/>
<path d="M23 19 H46 V32 Q46 38 40 38 H23Z" fill="#432f48"/>
<path d="M15.6 8.6 L33.8 18.7 L15.6 28.8Z" fill="#b5aabb" stroke="#b5aabb" stroke-width="0.8" stroke-linejoin="round"/>
</svg></div>
<div class="lb" style="left:386.6px;top:394.9px">MoviesMod<br>.Wiki -<br>Doctor Z…</div>
<div class="ic" style="left:508px;top:346px"><svg width="38" height="46" viewBox="0 0 38 46">
<rect x="0.5" y="0.5" width="37" height="45" rx="5" fill="#f5f5f5" stroke="#c4c4c4"/>
<g fill="none" stroke="#8f6fd6" stroke-width="1.6">
<path d="M38 31 H19 A9 9 0 0 1 19 13"/>
<path d="M38 28 H19 A6 6 0 0 1 19 16"/>
<path d="M38 25 H19 A3 3 0 0 1 19 19"/>
</g></svg></div>
<div class="lb" style="left:482.4px;top:394.9px">8a14704c5c<br>01a7dc9bd<br>7e1a6990…</div>
<div class="ic" style="left:603px;top:329px"><svg width="40" height="63" viewBox="0 0 40 63"><rect x="0.7" y="0.7" width="38.6" height="61.6" rx="3" fill="#fff" stroke="#bdbdbd" stroke-width="1.3"/></svg></div>
<div class="lb sel" style="left:578.2px;top:394.9px">inspireuplif<br>t-white-<br>logo.svg</div>
<div class="ic" style="left:700px;top:346px"><svg width="38" height="46" viewBox="0 0 38 46">
<rect x="0.5" y="0.5" width="37" height="45" rx="5" fill="#f7f7f7" stroke="#c0c0c0"/>
<rect x="7" y="14" width="24" height="1" fill="#8c8c8c"/><rect x="7" y="17" width="24" height="1" fill="#8c8c8c"/><rect x="7" y="20" width="24" height="1" fill="#8c8c8c"/><rect x="7" y="23" width="24" height="1" fill="#8c8c8c"/><rect x="7" y="26" width="24" height="1" fill="#8c8c8c"/><rect x="7" y="29" width="24" height="1" fill="#8c8c8c"/><rect x="7" y="32" width="12" height="1" fill="#8c8c8c"/>
</svg></div>
<div class="lb" style="left:674.0px;top:394.9px">iu_orders_<br>2023-10-18.<br>csv</div>
<div class="ic" style="left:796px;top:346px"><svg width="38" height="46" viewBox="0 0 38 46">
<rect x="0.5" y="0.5" width="37" height="45" rx="5" fill="#f7f7f7" stroke="#c0c0c0"/>
<rect x="7" y="14" width="24" height="1" fill="#8c8c8c"/><rect x="7" y="17" width="24" height="1" fill="#8c8c8c"/><rect x="7" y="20" width="24" height="1" fill="#8c8c8c"/><rect x="7" y="23" width="24" height="1" fill="#8c8c8c"/><rect x="7" y="26" width="24" height="1" fill="#8c8c8c"/><rect x="7" y="29" width="24" height="1" fill="#8c8c8c"/><rect x="7" y="32" width="12" height="1" fill="#8c8c8c"/>
</svg></div>
<div class="lb" style="left:769.8px;top:394.9px">usdc_2023-<br>10-10.csv</div>
<div class="ic" style="left:892px;top:346px"><svg width="38" height="46" viewBox="0 0 38 46"><defs>
<linearGradient id="dgf53f86" x1="0" y1="0" x2="1" y2="1"><stop offset="0" stop-color="#f53f86"/><stop offset="1" stop-color="#f59cc2"/></linearGradient></defs>
<rect x="0" y="0" width="38" height="46" rx="6" fill="url(#dgf53f86)"/>
<rect x="17" y="0" width="3.8" height="46" fill="#f8a6c9" opacity="0.9"/>
<rect x="2.5" y="30.8" width="11.3" height="8.1" fill="#fff"/>
<g fill="#333"><rect x="4.2" y="32.6" width="1.2" height="4.5"/><rect x="6.6" y="32.6" width="1.2" height="4.5"/><rect x="9" y="32.6" width="1.2" height="4.5"/><rect x="11.2" y="32.6" width="1.2" height="4.5"/></g>
<path d="M28.5 41 Q23 38 23.5 33.5 Q24.5 28.5 29.5 28.5 Q34 29 34 33.5 Q33.5 37 30 37 Q27 36.5 27.5 33.5 Q28 31.5 30.5 32" fill="none" stroke="#c8286a" stroke-width="1"/>
</svg></div>
<div class="lb" style="left:865.6px;top:394.9px">code_<br>1.83.0-<br>16963508…</div>
<div class="ic" style="left:975px;top:330px"><svg width="63" height="62" viewBox="0 0 63 62"><rect x="0.7" y="0.7" width="61.6" height="60.6" rx="3" fill="#fff" stroke="#bdbdbd" stroke-width="1.3"/><defs><linearGradient id="rvbg" x1="0" y1="0" x2="1" y2="0"><stop offset="0" stop-color="#1a1aa8"/><stop offset="0.3" stop-color="#0c0a50"/><stop offset="1" stop-color="#050420"/></linearGradient>
<linearGradient id="rvv" x1="0" y1="0" x2="0" y2="1"><stop offset="0" stop-color="#5a8cff"/><stop offset="0.45" stop-color="#8a9af0"/><stop offset="0.6" stop-color="#e8107a"/><stop offset="0.72" stop-color="#6a3ad0"/><stop offset="1" stop-color="#4a3ab8"/></linearGradient></defs>
<rect x="3" y="3" width="57" height="56" fill="url(#rvbg)"/>
<rect x="34" y="9" width="26" height="1" fill="#2a2ab0" opacity="0.8"/><rect x="34" y="22" width="26" height="1" fill="#2a2ab0" opacity="0.7"/><rect x="20" y="30" width="40" height="1" fill="#2a2ab0" opacity="0.6"/>
<rect x="23.5" y="3" width="1.6" height="16" fill="#6a80ff"/>
<path d="M19 19 Q24 17.5 30 19 V30 Q31 38 34 44 Q40 52 47 59 H4 Q12 52 15 44 Q18 38 19 30Z" fill="url(#rvv)"/>
<g fill="#c8c0ff" opacity="0.8"><circle cx="12" cy="55" r="0.6"/><circle cx="18" cy="50" r="0.6"/><circle cx="24" cy="54" r="0.6"/><circle cx="30" cy="49" r="0.6"/><circle cx="36" cy="55" r="0.6"/><circle cx="21" cy="46" r="0.5"/><circle cx="28" cy="57" r="0.5"/><circle cx="40" cy="56" r="0.5"/></g>
</svg></div>
<div class="lb" style="left:961.4px;top:394.9px">review3 (1).<br>png</div>
<div class="ic" style="left:1071px;top:330px"><svg width="63" height="62" viewBox="0 0 63 62"><rect x="0.7" y="0.7" width="61.6" height="60.6" rx="3" fill="#fff" stroke="#bdbdbd" stroke-width="1.3"/><defs><linearGradient id="rvbg" x1="0" y1="0" x2="1" y2="0"><stop offset="0" stop-color="#1a1aa8"/><stop offset="0.3" stop-color="#0c0a50"/><stop offset="1" stop-color="#050420"/></linearGradient>
<linearGradient id="rvv" x1="0" y1="0" x2="0" y2="1"><stop offset="0" stop-color="#5a8cff"/><stop offset="0.45" stop-color="#8a9af0"/><stop offset="0.6" stop-color="#e8107a"/><stop offset="0.72" stop-color="#6a3ad0"/><stop offset="1" stop-color="#4a3ab8"/></linearGradient></defs>
<rect x="3" y="3" width="57" height="56" fill="url(#rvbg)"/>
<rect x="34" y="9" width="26" height="1" fill="#2a2ab0" opacity="0.8"/><rect x="34" y="22" width="26" height="1" fill="#2a2ab0" opacity="0.7"/><rect x="20" y="30" width="40" height="1" fill="#2a2ab0" opacity="0.6"/>
<rect x="23.5" y="3" width="1.6" height="16" fill="#6a80ff"/>
<path d="M19 19 Q24 17.5 30 19 V30 Q31 38 34 44 Q40 52 47 59 H4 Q12 52 15 44 Q18 38 19 30Z" fill="url(#rvv)"/>
<g fill="#c8c0ff" opacity="0.8"><circle cx="12" cy="55" r="0.6"/><circle cx="18" cy="50" r="0.6"/><circle cx="24" cy="54" r="0.6"/><circle cx="30" cy="49" r="0.6"/><circle cx="36" cy="55" r="0.6"/><circle cx="21" cy="46" r="0.5"/><circle cx="28" cy="57" r="0.5"/><circle cx="40" cy="56" r="0.5"/></g>
</svg></div>
<div class="lb" style="left:1057.2px;top:394.9px">review3.<br>png</div>
<div class="ic" style="left:1176px;top:330px"><svg width="45" height="62" viewBox="0 0 45 62"><rect x="0.7" y="0.7" width="43.6" height="60.6" rx="3" fill="#fff" stroke="#bdbdbd" stroke-width="1.3"/><defs><linearGradient id="w3g" x1="0" y1="0" x2="0" y2="1"><stop offset="0" stop-color="#1e2a08"/><stop offset="0.3" stop-color="#4e6e14"/><stop offset="0.72" stop-color="#90c02a"/><stop offset="0.74" stop-color="#d8e8c0"/><stop offset="1" stop-color="#ffffff"/></linearGradient><clipPath id="w3c"><rect x="3" y="3" width="39" height="56"/></clipPath></defs>
<rect x="3" y="3" width="39" height="56" fill="url(#w3g)"/>
<g clip-path="url(#w3c)" fill="none" stroke="#fff" stroke-width="3.6">
<path d="M2 9 Q3 25 9 25 Q14 25 14 16 Q14 25 19 25 Q25 25 26 14"/>
<path d="M27 13 Q30 8 35 8 Q42 8 41 15 Q40 20 34 20 Q42 20 42 28 Q42 37 34 37 Q28 37 26 32"/>
</g>
<rect x="3" y="27" width="20" height="3" fill="#fff" opacity="0.85"/>
</svg></div>
<div class="lb" style="left:1153.0px;top:394.9px">myw3schoo<br>lsimage.jpg</div>
<div class="ic" style="left:1262px;top:351px"><svg width="63" height="41" viewBox="0 0 63 41"><rect x="0.7" y="0.7" width="61.6" height="39.6" rx="3" fill="#fff" stroke="#bdbdbd" stroke-width="1.3"/><path d="M7 3.5 H56 L31.5 38Z" fill="#474747"/></svg></div>
<div class="lb" style="left:1248.8px;top:394.9px">polygon.<br>svg</div>
<div class="ic" style="left:1367px;top:352px"><svg width="46" height="38" viewBox="0 0 46 38">
<rect x="0" y="0" width="46" height="38" rx="6" fill="#2f2034"/>
<path d="M23 0 H40 Q46 0 46 6 V19 H23Z" fill="#3a2940"/>
<path d="M0 19 H23 V38 H6 Q0 38 0 32Z" fill="#36253b"/>
<path d="M23 19 H46 V32 Q46 38 40 38 H23Z" fill="#432f48"/>
<path d="M15.6 8.6 L33.8 18.7 L15.6 28.8Z" fill="#b5aabb" stroke="#b5aabb" stroke-width="0.8" stroke-linejoin="round"/>
</svg></div>
<div class="lb" style="left:1344.6px;top:394.9px">Birthday<br>Party<br>Animate…</div>
<div class="ic" style="left:1466px;top:346px"><svg width="38" height="46" viewBox="0 0 38 46"><defs>
<linearGradient id="dgf53f86" x1="0" y1="0" x2="1" y2="1"><stop offset="0" stop-color="#f53f86"/><stop offset="1" stop-color="#f59cc2"/></linearGradient></defs>
<rect x="0" y="0" width="38" height="46" rx="6" fill="url(#dgf53f86)"/>
<rect x="17" y="0" width="3.8" height="46" fill="#f8a6c9" opacity="0.9"/>
<rect x="2.5" y="30.8" width="11.3" height="8.1" fill="#fff"/>
<g fill="#333"><rect x="4.2" y="32.6" width="1.2" height="4.5"/><rect x="6.6" y="32.6" width="1.2" height="4.5"/><rect x="9" y="32.6" width="1.2" height="4.5"/><rect x="11.2" y="32.6" width="1.2" height="4.5"/></g>
<path d="M28.5 41 Q23 38 23.5 33.5 Q24.5 28.5 29.5 28.5 Q34 29 34 33.5 Q33.5 37 30 37 Q27 36.5 27.5 33.5 Q28 31.5 30.5 32" fill="none" stroke="#c8286a" stroke-width="1"/>
</svg></div>
<div class="lb" style="left:1440.4px;top:394.9px">freedownlo<br>admanager.<br>deb</div>
<div class="ic" style="left:1562px;top:346px"><svg width="38" height="46" viewBox="0 0 38 46"><defs>
<linearGradient id="zg" x1="0" y1="0" x2="0" y2="1"><stop offset="0" stop-color="#fcd143"/><stop offset="1" stop-color="#fde47f"/></linearGradient></defs>
<rect x="0" y="0" width="38" height="46" rx="5" fill="url(#zg)"/>
<rect x="0" y="22" width="38" height="24" rx="0" fill="#ffffff" opacity="0.13"/>
<path d="M17 1 h2.3 v2.3 h-2.3z M19.3 3.3 h2.3 v2.3 h-2.3z M17 5.6 h2.3 v2.3 h-2.3z M19.3 7.9 h2.3 v2.3 h-2.3z M17 10.2 h2.3 v2.3 h-2.3z M19.3 12.5 h2.3 v2.3 h-2.3z M17 14.8 h2.3 v2.3 h-2.3z M19.3 17.1 h2.3 v2.3 h-2.3z" fill="#5a4a1a"/>
<rect x="17" y="21.6" width="4.4" height="6" fill="#6a5a2a"/>
<rect x="18.2" y="24.6" width="2" height="2" fill="#fde47f"/>
</svg></div>
<div class="lb" style="left:1536.2px;top:394.9px">itdeptiu.zip</div>
<div class="ic" style="left:1658px;top:346px"><svg width="38" height="46" viewBox="0 0 38 46"><defs>
<linearGradient id="dge89a5e" x1="0" y1="0" x2="1" y2="1"><stop offset="0" stop-color="#e89a5e"/><stop offset="1" stop-color="#f0bf8e"/></linearGradient></defs>
<rect x="0" y="0" width="38" height="46" rx="6" fill="url(#dge89a5e)"/>
<rect x="17" y="0" width="3.8" height="46" fill="#f5cfa8" opacity="0.9"/>
<rect x="2.5" y="30.8" width="11.3" height="8.1" fill="#fff"/>
<g fill="#333"><rect x="4.2" y="32.6" width="1.2" height="4.5"/><rect x="6.6" y="32.6" width="1.2" height="4.5"/><rect x="9" y="32.6" width="1.2" height="4.5"/><rect x="11.2" y="32.6" width="1.2" height="4.5"/></g>
<g fill="#d98a4e"><rect x="25" y="34" width="9" height="0.8"/><rect x="25" y="36" width="9" height="0.8"/><rect x="25" y="38" width="7" height="0.8"/></g>
</svg></div>
<div class="lb" style="left:1632.0px;top:394.9px">slack-<br>4.34.120-<br>0.1.el8.x8…</div>
<div class="ic" style="left:1754px;top:346px"><svg width="38" height="46" viewBox="0 0 38 46"><defs>
<linearGradient id="dgf53f86" x1="0" y1="0" x2="1" y2="1"><stop offset="0" stop-color="#f53f86"/><stop offset="1" stop-color="#f59cc2"/></linearGradient></defs>
<rect x="0" y="0" width="38" height="46" rx="6" fill="url(#dgf53f86)"/>
<rect x="17" y="0" width="3.8" height="46" fill="#f8a6c9" opacity="0.9"/>
<rect x="2.5" y="30.8" width="11.3" height="8.1" fill="#fff"/>
<g fill="#333"><rect x="4.2" y="32.6" width="1.2" height="4.5"/><rect x="6.6" y="32.6" width="1.2" height="4.5"/><rect x="9" y="32.6" width="1.2" height="4.5"/><rect x="11.2" y="32.6" width="1.2" height="4.5"/></g>
<path d="M28.5 41 Q23 38 23.5 33.5 Q24.5 28.5 29.5 28.5 Q34 29 34 33.5 Q33.5 37 30 37 Q27 36.5 27.5 33.5 Q28 31.5 30.5 32" fill="none" stroke="#c8286a" stroke-width="1"/>
</svg></div>
<div class="lb" style="left:1727.8px;top:394.9px">code_<br>1.82.2-<br>16946718…</div>
<div class="ic" style="left:1850px;top:346px"><svg width="38" height="46" viewBox="0 0 38 46"><defs>
<linearGradient id="dgf53f86" x1="0" y1="0" x2="1" y2="1"><stop offset="0" stop-color="#f53f86"/><stop offset="1" stop-color="#f59cc2"/></linearGradient></defs>
<rect x="0" y="0" width="38" height="46" rx="6" fill="url(#dgf53f86)"/>
<rect x="17" y="0" width="3.8" height="46" fill="#f8a6c9" opacity="0.9"/>
<rect x="2.5" y="30.8" width="11.3" height="8.1" fill="#fff"/>
<g fill="#333"><rect x="4.2" y="32.6" width="1.2" height="4.5"/><rect x="6.6" y="32.6" width="1.2" height="4.5"/><rect x="9" y="32.6" width="1.2" height="4.5"/><rect x="11.2" y="32.6" width="1.2" height="4.5"/></g>
<path d="M28.5 41 Q23 38 23.5 33.5 Q24.5 28.5 29.5 28.5 Q34 29 34 33.5 Q33.5 37 30 37 Q27 36.5 27.5 33.5 Q28 31.5 30.5 32" fill="none" stroke="#c8286a" stroke-width="1"/>
</svg></div>
<div class="lb" style="left:1823.6px;top:394.9px">google-<br>chrome-<br>stable_cu…</div>
<div class="ic" style="left:217px;top:461px"><svg width="46" height="38" viewBox="0 0 46 38">
<rect x="0" y="0" width="46" height="38" rx="6" fill="#2f2034"/>
<path d="M23 0 H40 Q46 0 46 6 V19 H23Z" fill="#3a2940"/>
<path d="M0 19 H23 V38 H6 Q0 38 0 32Z" fill="#36253b"/>
<path d="M23 19 H46 V32 Q46 38 40 38 H23Z" fill="#432f48"/>
<path d="M15.6 8.6 L33.8 18.7 L15.6 28.8Z" fill="#b5aabb" stroke="#b5aabb" stroke-width="0.8" stroke-linejoin="round"/>
</svg></div>
<div class="lb" style="left:195.0px;top:504.2px">Crazy.<br>Stupid.<br>Love.201…</div>
<div style="position:absolute;left:0;top:0;width:1920px;height:27px;background:#1c1c1c"></div>
<div class="tb" style="left:12px;top:4.5px;font-size:15px;letter-spacing:0.35px">Activities</div>
<div class="ic" style="left:109px;top:6px"><svg width="16" height="14" viewBox="0 0 16 14"><path d="M0.7 1.5 Q0.7 0.7 1.5 0.7 H6 L7.5 2.3 H14.5 Q15.3 2.3 15.3 3 V12.5 Q15.3 13.3 14.5 13.3 H1.5 Q0.7 13.3 0.7 12.5Z M0.7 4.5 H15.3" fill="none" stroke="#f0f0f0" stroke-width="1.2"/></svg></div>
<div class="tb" style="left:131px;top:5px">Files</div>
<div class="ic" style="left:167px;top:11px"><svg width="10" height="5" viewBox="0 0 10 5"><path d="M0 0 H10 L5 5Z" fill="#f0f0f0"/></svg></div>
<div class="tb" style="left:909px;top:4px">10:42 &nbsp;10</div>
<div class="ic" style="left:973px;top:9px"><svg width="40" height="14" viewBox="0 0 40 14"><path d="M38.5 4.2 Q34 2.6 31.6 4.6 Q29.8 7.6 33 7.6 H28.6 Q28 9.6 25.6 9.6 Q23.4 9.6 23.6 7.2 M23 7.6 Q23.4 4.6 20.8 4.6 Q18.6 4.6 19 7 Q20 8 22.4 7.6 Q21.6 11.2 15.6 12.6 M14.4 5.8 Q15.4 10 12.4 12.6 M10.8 5.4 Q12.2 9.2 9 11.2 Q4.4 12.8 1.6 10.6 Q0.6 8.4 2.6 6.4" fill="none" stroke="#ececec" stroke-width="1.35"/><circle cx="25.7" cy="1.9" r="0.9" fill="#ececec"/><circle cx="34.4" cy="10.9" r="0.9" fill="#ececec"/></svg></div>
<div class="ic" style="left:1729px;top:6px"><svg width="17" height="16" viewBox="0 0 17 16"><g stroke="#e8e8e8" stroke-width="2" stroke-linecap="round"><path d="M5 3 V7"/><path d="M9 1.5 V5"/><path d="M2 7 H6"/><path d="M11 6 H14"/><path d="M3 10 H7"/></g><circle cx="10.5" cy="11" r="4.3" fill="#e91e63"/></svg></div>
<div class="ic" style="left:1768px;top:5px"><svg width="17" height="17" viewBox="0 0 17 17"><path d="M2 15.5 V3 Q2 1.5 3.5 1.5 H13.5 Q15.5 1.5 15.5 3.5 V15.5 H5" fill="none" stroke="#f2f2f2" stroke-width="2.2"/><path d="M5 9 H12 M9.5 6 L12.5 9 L9.5 12" fill="none" stroke="#f2f2f2" stroke-width="2"/></svg></div>
<div class="ic" style="left:1813px;top:6px"><svg width="16" height="14" viewBox="0 0 16 14"><rect x="6" y="0" width="4" height="3.5" fill="#eee"/><rect x="0" y="10" width="4.5" height="3.5" fill="#eee"/><rect x="11.5" y="10" width="4.5" height="3.5" fill="#eee"/><path d="M8 3.5 V7 M2.2 10 V7 H13.8 V10" fill="none" stroke="#eee" stroke-width="1.3"/></svg></div>
<div class="ic" style="left:1841px;top:6px"><svg width="15" height="14" viewBox="0 0 15 14"><path d="M0 4.5 H3 L7 1 V13 L3 9.5 H0Z" fill="#eee"/><path d="M9 4.5 Q10.5 7 9 9.5 M11 2.5 Q14 7 11 11.5" fill="none" stroke="#bbb" stroke-width="1.2"/></svg></div>
<div class="ic" style="left:1871px;top:5px"><svg width="11" height="17" viewBox="0 0 11 17"><rect x="3.5" y="0.5" width="4" height="2" fill="#eee"/><rect x="0.7" y="2.2" width="9.6" height="14" rx="1.5" fill="none" stroke="#eee" stroke-width="1.3"/><rect x="2.3" y="9" width="6.4" height="5.7" fill="#eee"/></svg></div>
<div class="ic" style="left:1895px;top:11px"><svg width="10" height="5" viewBox="0 0 10 5"><path d="M0 0 H10 L5 5Z" fill="#eee"/></svg></div>
<div style="position:absolute;left:0;top:27px;width:1920px;height:46px;background:#2f2f2f"></div>
<div style="position:absolute;left:0;top:73px;width:1920px;height:1px;background:#1a1a1a"></div>
<div class="hbtn" style="left:7px;top:34px;width:68px;height:32px"></div>
<div style="position:absolute;left:41px;top:34px;width:1px;height:32px;background:#262626"></div>
<div class="ic" style="left:20px;top:42px"><svg width="10" height="16" viewBox="0 0 10 16"><path d="M8 1 L2.5 8 L8 15" fill="none" stroke="#bdbdbd" stroke-width="1.1"/></svg></div>
<div class="ic" style="left:54px;top:42px"><svg width="10" height="16" viewBox="0 0 10 16"><path d="M2 1 L7.5 8 L2 15" fill="none" stroke="#8a8a8a" stroke-width="1.1"/></svg></div>
<div class="hbtn" style="left:518.5px;top:33px;width:841px;height:34px;background:#363636;border:1px solid #1d1d1d;box-sizing:border-box;border-radius:6px"></div>
<div class="hbtn" style="left:519px;top:34px;width:224px;height:32px;background:#4a4a4a;border-radius:5px 0 0 5px"></div>
<div style="position:absolute;left:614px;top:34px;width:1px;height:32px;background:#2c2c2c"></div>
<div style="position:absolute;left:743px;top:34px;width:1px;height:32px;background:#2c2c2c"></div>
<div class="ic" style="left:528px;top:42px"><svg width="16" height="16" viewBox="0 0 16 16"><path d="M1.5 8 L8 1.8 L14.5 8 M3 6.8 V14.5 H6.5 V10 H9.5 V14.5 H13 V6.8" fill="none" stroke="#f0f0f0" stroke-width="1.2"/><rect x="11" y="2" width="1.5" height="3" fill="#f0f0f0"/></svg></div>
<div class="hbt" style="left:558px;top:41px">Home</div>
<div class="hbt" style="left:631px;top:41px">Downloads</div>
<div class="ic" style="left:722px;top:48px"><svg width="10" height="5" viewBox="0 0 10 5"><path d="M0 0 H10 L5 5Z" fill="#f0f0f0"/></svg></div>
<div class="hbtn" style="left:1366px;top:34px;width:34px;height:32px;background:#4a4a4a"></div>
<div class="ic" style="left:1375px;top:43px"><svg width="16" height="16" viewBox="0 0 16 16"><circle cx="6.8" cy="6.8" r="5.3" fill="none" stroke="#f0f0f0" stroke-width="1.3"/><path d="M10.5 10.5 L14.5 14.5" stroke="#f0f0f0" stroke-width="1.8"/></svg></div>
<div class="hbtn" style="left:1675px;top:34px;width:69px;height:32px;background:#4a4a4a"></div>
<div style="position:absolute;left:1709px;top:34px;width:1px;height:32px;background:#2c2c2c"></div>
<div class="ic" style="left:1685px;top:43px"><svg width="14" height="13" viewBox="0 0 14 13"><g fill="none" stroke="#f0f0f0" stroke-width="1"><rect x="0.5" y="0.5" width="2.5" height="2.5"/><rect x="0.5" y="5.2" width="2.5" height="2.5"/><rect x="0.5" y="9.9" width="2.5" height="2.5"/></g><g fill="#f0f0f0"><rect x="5" y="1.2" width="9" height="1.1"/><rect x="5" y="6" width="9" height="1.1"/><rect x="5" y="10.6" width="9" height="1.1"/></g></svg></div>
<div class="ic" style="left:1722px;top:48px"><svg width="10" height="5" viewBox="0 0 10 5"><path d="M0 0 H10 L5 5Z" fill="#f0f0f0"/></svg></div>
<div class="hbtn" style="left:1752px;top:34px;width:34px;height:32px;background:#4a4a4a"></div>
<div class="ic" style="left:1764px;top:44px"><svg width="10" height="11" viewBox="0 0 10 11"><g fill="#f0f0f0"><rect x="0" y="0.5" width="10" height="1.1"/><rect x="0" y="4.8" width="10" height="1.1"/><rect x="0" y="9.1" width="10" height="1.1"/></g></svg></div>
<div style="position:absolute;left:1813px;top:52px;width:8px;height:1.2px;background:#f0f0f0"></div>
<div class="ic" style="left:1852px;top:46px"><svg width="10" height="10" viewBox="0 0 10 10"><rect x="0.6" y="3" width="6.4" height="6.4" fill="none" stroke="#f0f0f0" stroke-width="1.1"/><path d="M3 3 V0.6 H9.4 V7 H7" fill="none" stroke="#f0f0f0" stroke-width="1"/></svg></div>
<div class="ic" style="left:1887px;top:40px"><svg width="20" height="20" viewBox="0 0 20 20"><circle cx="10" cy="10" r="10" fill="#e95420"/><path d="M6.5 6.5 L13.5 13.5 M13.5 6.5 L6.5 13.5" stroke="#fff" stroke-width="1.4"/></svg></div>
<div style="position:absolute;left:1583px;top:989px;width:340px;height:24px;background:#f6f6f6;border:1px solid #d5d5d5;border-radius:5px 0 0 0;border-right:none;border-bottom:none"></div><div class="sbt" style="left:1596px;top:992px;color:#3a3a3a;font-size:15px">“inspireuplift-white-logo.svg” selected&nbsp; (4.0 kB)</div>
<div style="position:absolute;left:0;top:1012px;width:1920px;height:68px;background:linear-gradient(#25191f 0px,#231721 12px,#211522 20px,#211522 68px)"></div>
<div style="position:absolute;left:652px;top:1014px;width:64px;height:64px;border-radius:7px;background:#4a3f48"></div>
<div class="ic" style="left:13.0px;top:1021.0px"><svg width="46" height="48" viewBox="0 0 46 48"><defs><radialGradient id="ff1" cx="0.7" cy="0.2" r="0.9"><stop offset="0" stop-color="#ffe84a"/><stop offset="0.4" stop-color="#ff9a1f"/><stop offset="0.75" stop-color="#ff3c4a"/><stop offset="1" stop-color="#d6218a"/></radialGradient><radialGradient id="ff2" cx="0.4" cy="0.4" r="0.6"><stop offset="0" stop-color="#b54cff"/><stop offset="1" stop-color="#5a2ab8"/></radialGradient></defs><path d="M23 47 C9 47 1 37 2 24 C3 14 9 9 12 7 C11 11 12 14 14 15 C16 10 22 7 26 1 C28 6 31 8 36 12 C43 18 45 26 43 33 C40 42 32 47 23 47Z" fill="url(#ff1)"/><circle cx="23" cy="25" r="10" fill="url(#ff2)"/><path d="M8 18 Q14 12 22 16 Q14 17 12 22Z" fill="#ffb02e"/></svg></div>
<div style="position:absolute;left:34px;top:1073px;width:5px;height:5px;border-radius:50%;background:#e95420"></div>
<div class="ic" style="left:84.0px;top:1023.0px"><svg width="48" height="46" viewBox="0 0 48 46"><defs><linearGradient id="tb1" x1="0" y1="0" x2="1" y2="1"><stop offset="0" stop-color="#1f86e8"/><stop offset="1" stop-color="#0f4fb8"/></linearGradient></defs><path d="M5 10 Q0 24 8 36 Q17 46 30 45 Q44 43 47 30 Q49 16 38 6 Q43 2 46 1 Q32 -2 22 6 Q12 5 5 10Z" fill="url(#tb1)"/><ellipse cx="25" cy="25" rx="14" ry="12" fill="#cfe6ff"/><path d="M13 20 L25 28 L37 20" fill="none" stroke="#9cc4ee" stroke-width="2"/><path d="M3 14 Q2 30 14 38 Q6 28 9 16Z" fill="#2a6fd6"/></svg></div>
<div class="ic" style="left:160.0px;top:1022.0px"><svg width="40" height="48" viewBox="0 0 40 48"><path d="M2 2 H28 L38 12 V46 H2Z" fill="#fff" stroke="#1e6fae" stroke-width="2.5"/><path d="M28 2 V12 H38" fill="#1e6fae"/><rect x="2" y="24" width="36" height="22" fill="#e6f0f8"/><g fill="#1e6fae"><rect x="7" y="17" width="8" height="2.5"/><rect x="7" y="22" width="8" height="2.5"/><rect x="7" y="27" width="8" height="2.5"/><rect x="7" y="32" width="26" height="2.5"/><rect x="7" y="37" width="20" height="2.5"/></g><rect x="18" y="16" width="15" height="12" fill="#7ea6c6"/><path d="M18 28 L23 21 L27 25 L30 22 L33 28Z" fill="#555"/></svg></div>
<div class="ic" style="left:233.0px;top:1023.0px"><svg width="38" height="46" viewBox="0 0 38 46"><rect x="0" y="0" width="38" height="46" rx="4" fill="#e3ddd0"/><circle cx="19" cy="23" r="16" fill="#2e2e2e"/><circle cx="19" cy="23" r="13.5" fill="#e8c22a"/><circle cx="19" cy="23" r="5" fill="#333"/></svg></div>
<div class="ic" style="left:301.0px;top:1023.0px"><svg width="46" height="46" viewBox="0 0 46 46"><circle cx="23" cy="23" r="22.5" fill="#3d99e0"/><path d="M0.5 23 A22.5 22.5 0 0 0 45.5 23Z" fill="#4aa6ea"/><path d="M16 17 Q16 10 23 10 Q30 10 30 16.5 Q30 20.5 25.5 22.5 Q23 24 23 28" fill="none" stroke="#fff" stroke-width="3"/><circle cx="23" cy="34.5" r="2.2" fill="#fff"/></svg></div>
<div class="ic" style="left:375.0px;top:1023.0px"><svg width="42" height="46" viewBox="0 0 42 46"><path d="M2 42 H40 L41 45 H1Z" fill="#f28a10"/><path d="M17 2 Q21 0 25 2 L37 42 H5Z" fill="#f7941d"/><path d="M13 16 H29 L31 22 H11Z" fill="#e8e8e8"/><path d="M9 29 H33 L35 36 H7Z" fill="#e8e8e8"/></svg></div>
<div class="ic" style="left:439.0px;top:1023.0px"><svg width="46" height="46" viewBox="0 0 46 46"><rect x="2" y="6" width="44" height="38" rx="4" fill="#f07b3a"/><path d="M15 10 Q15 1 23 1 Q31 1 31 10" fill="none" stroke="#f7d0b8" stroke-width="2"/><path d="M23 12 L13 40 M23 12 L33 40 M10 30 H36" fill="none" stroke="#fff" stroke-width="3"/></svg></div>
<div class="ic" style="left:518.0px;top:1024.0px"><svg width="44" height="44" viewBox="0 0 44 44"><path d="M4.2 28.5 L31.5 4" stroke="#0d6ec2" stroke-width="6.5" stroke-linecap="round"/><path d="M4.2 15 L31.5 39.5" stroke="#1a90e8" stroke-width="6.5" stroke-linecap="round"/><path d="M30 1 L43 6.8 V37.2 L30 43 L31.5 38 V6Z" fill="#23a3f3"/></svg></div>
<div style="position:absolute;left:526px;top:1073px;width:5px;height:5px;border-radius:50%;background:#e95420"></div>
<div style="position:absolute;left:535px;top:1073px;width:5px;height:5px;border-radius:50%;background:#e95420"></div>
<div style="position:absolute;left:544px;top:1073px;width:5px;height:5px;border-radius:50%;background:#e95420"></div>
<div style="position:absolute;left:553px;top:1073px;width:5px;height:5px;border-radius:50%;background:#e95420"></div>
<div class="ic" style="left:591.0px;top:1025.0px"><svg width="42" height="42" viewBox="0 0 42 42"><circle cx="21" cy="21" r="21" fill="#fff"/><g stroke-width="5" stroke-linecap="round"><path d="M8.5 17 H19" stroke="#36c5f0"/><path d="M24.5 9.5 V18.5" stroke="#2eb67d"/><path d="M17 24.5 V33" stroke="#e01e5a"/><path d="M24 24.5 H33" stroke="#ecb22e"/></g><circle cx="17.5" cy="10" r="2.6" fill="#36c5f0"/><circle cx="32" cy="17" r="2.6" fill="#2eb67d"/><circle cx="10" cy="24.5" r="2.6" fill="#e01e5a"/><circle cx="24.5" cy="32" r="2.6" fill="#ecb22e"/></svg></div>
<div style="position:absolute;left:610px;top:1073px;width:5px;height:5px;border-radius:50%;background:#e95420"></div>
<div class="ic" style="left:662.0px;top:1024.0px"><svg width="44" height="44" viewBox="0 0 44 44"><rect x="0" y="0" width="44" height="44" rx="5" fill="#a69f87"/><path d="M6 10 Q6 8 8 8 H17 L20 11 H36 Q38 11 38 13 V34 Q38 36 36 36 H8 Q6 36 6 34Z" fill="#f4f2ee"/><path d="M6 14 H38" stroke="#dcd8cc" stroke-width="1"/></svg></div>
<div style="position:absolute;left:682px;top:1073px;width:5px;height:5px;border-radius:50%;background:#e95420"></div>
<div class="ic" style="left:732.0px;top:1022.0px"><svg width="48" height="48" viewBox="0 0 48 48"><circle cx="24" cy="24" r="24" fill="#1ea362"/><path d="M24 0 A24 24 0 0 1 44.8 12 H24 A12 12 0 0 0 13.6 18 L3.2 12 A24 24 0 0 1 24 0Z" fill="#db4437"/><path d="M44.8 12 A24 24 0 0 1 24 48 L34.4 30 A12 12 0 0 0 34.4 18Z" fill="#fcc934"/><path d="M44.8 12 H24 L34.4 18" fill="#fcc934"/><circle cx="24" cy="24" r="11" fill="#fff"/><circle cx="24" cy="24" r="8.5" fill="#1a73e8"/></svg></div>
<div style="position:absolute;left:750px;top:1073px;width:5px;height:5px;border-radius:50%;background:#e95420"></div>
<div style="position:absolute;left:759px;top:1073px;width:5px;height:5px;border-radius:50%;background:#e95420"></div>
<div style="position:absolute;left:1869px;top:1031px;width:6px;height:6px;border-radius:1.5px;background:#f1e9ee"></div>
<div style="position:absolute;left:1881px;top:1031px;width:6px;height:6px;border-radius:1.5px;background:#f1e9ee"></div>
<div style="position:absolute;left:1893px;top:1031px;width:6px;height:6px;border-radius:1.5px;background:#f1e9ee"></div>
<div style="position:absolute;left:1869px;top:1043px;width:6px;height:6px;border-radius:1.5px;background:#f1e9ee"></div>
<div style="position:absolute;left:1881px;top:1043px;width:6px;height:6px;border-radius:1.5px;background:#f1e9ee"></div>
<div style="position:absolute;left:1893px;top:1043px;width:6px;height:6px;border-radius:1.5px;background:#f1e9ee"></div>
<div style="position:absolute;left:1869px;top:1055px;width:6px;height:6px;border-radius:1.5px;background:#f1e9ee"></div>
<div style="position:absolute;left:1881px;top:1055px;width:6px;height:6px;border-radius:1.5px;background:#f1e9ee"></div>
<div style="position:absolute;left:1893px;top:1055px;width:6px;height:6px;border-radius:1.5px;background:#f1e9ee"></div>
<div style="position:absolute;left:1920px;top:0px;width:1920px;height:37px;background:#3b3a3a;"></div>
<div class="ttl" style="left:2654px;top:9px;">DevTools - sellerfront.itdeptiu.com/product/add?hash=A68079T</div>
<div style="position:absolute;left:3750px;top:20px;width:9px;height:1.3px;background:#e6e6e6;"></div>
<div class="ic" style="left:3783px;top:13px"><svg width="10" height="10" viewBox="0 0 10 10"><rect x="0.6" y="3" width="6.4" height="6.4" fill="none" stroke="#e6e6e6" stroke-width="1.1"/><path d="M3 3 V0.6 H9.4 V7 H7" fill="none" stroke="#e6e6e6" stroke-width="1"/></svg></div>
<div class="ic" style="left:3812px;top:8px"><svg width="20" height="20" viewBox="0 0 20 20"><circle cx="10" cy="10" r="9.5" fill="#575656"/><path d="M6.5 6.5 L13.5 13.5 M13.5 6.5 L6.5 13.5" stroke="#fff" stroke-width="1.5"/></svg></div>
<div style="position:absolute;left:1920px;top:37px;width:1920px;height:26px;background:#edf0f6;"></div>
<div style="position:absolute;left:1920px;top:63px;width:1920px;height:1px;background:#d3def0;"></div>
<div class="ic" style="left:1928px;top:43px"><svg width="16" height="15" viewBox="0 0 16 15"><path d="M6 14 H1 V1 H14 V6" fill="none" stroke="#474747" stroke-width="1.2" stroke-dasharray="1.6 1.2"/><path d="M7 7 L14.5 14.5 M7 7 V12 M7 7 H12" fill="none" stroke="#474747" stroke-width="1.4"/></svg></div>
<div class="ic" style="left:1955px;top:43px"><svg width="18" height="14" viewBox="0 0 18 14"><path d="M3 10 V1 H14 V3" fill="none" stroke="#474747" stroke-width="1.3"/><path d="M0 12.5 H9" stroke="#474747" stroke-width="1.4"/><rect x="10.6" y="4.6" width="5.8" height="8.8" fill="none" stroke="#474747" stroke-width="1.3"/></svg></div>
<div style="position:absolute;left:1982px;top:42px;width:1px;height:16px;background:#d0d5dd;"></div>
<div class="dtab" style="left:2000.5px;top:42px;color:#0b57d0">Network</div>
<div class="dtab" style="left:2072px;top:42px;color:#474747">Elements</div>
<div class="dtab" style="left:2146.6px;top:42px;color:#474747">Console</div>
<div class="dtab" style="left:2213.7px;top:42px;color:#474747">Performance</div>
<div class="dtab" style="left:2308px;top:42px;color:#474747">Memory</div>
<div class="dtab" style="left:2376.5px;top:42px;color:#474747">Application</div>
<div class="dtab" style="left:2462.5px;top:42px;color:#474747">Security</div>
<div class="dtab" style="left:2541.7px;top:42px;color:#474747">Lighthouse</div>
<div class="dtab" style="left:2625.6px;top:42px;color:#474747">Recorder</div>
<div class="dtab" style="left:2726.7px;top:42px;color:#474747">Redux</div>
<div class="dtab" style="left:2784.7px;top:42px;color:#474747">EditThisCookie</div>
<div class="dtab" style="left:2889.7px;top:42px;color:#474747">AdBlock</div>
<div class="dtab" style="left:2975.5px;top:42px;color:#474747">Components</div>
<div class="dtab" style="left:3086px;top:42px;color:#474747">Profiler</div>
<div style="position:absolute;left:1989px;top:62px;width:71px;height:2px;background:#0b57d0;"></div>
<div class="ic" style="left:2680px;top:44px"><svg width="12" height="13" viewBox="0 0 12 13"><path d="M4 1 H8 M4.5 1 V5 L1 12 H11 L7.5 5 V1" fill="none" stroke="#474747" stroke-width="1.1"/></svg></div>
<div class="ic" style="left:2958px;top:43px"><svg width="14" height="14" viewBox="0 0 14 14"><rect width="14" height="14" rx="2" fill="#8b5cf6"/><g fill="none" stroke="#d8c8ff" stroke-width="0.8"><ellipse cx="7" cy="7" rx="5" ry="2"/><ellipse cx="7" cy="7" rx="5" ry="2" transform="rotate(60 7 7)"/><ellipse cx="7" cy="7" rx="5" ry="2" transform="rotate(-60 7 7)"/></g><circle cx="7" cy="7" r="1" fill="#eee"/></svg></div>
<div class="ic" style="left:3069px;top:43px"><svg width="14" height="14" viewBox="0 0 14 14"><rect width="14" height="14" rx="2" fill="#8b5cf6"/><g fill="none" stroke="#d8c8ff" stroke-width="0.8"><ellipse cx="7" cy="7" rx="5" ry="2"/><ellipse cx="7" cy="7" rx="5" ry="2" transform="rotate(60 7 7)"/><ellipse cx="7" cy="7" rx="5" ry="2" transform="rotate(-60 7 7)"/></g><circle cx="7" cy="7" r="1" fill="#eee"/></svg></div>
<div class="ic" style="left:3692px;top:45px"><svg width="11" height="11" viewBox="0 0 11 11"><circle cx="5.5" cy="5.5" r="5.5" fill="#d93025"/><path d="M3.5 3.5 L7.5 7.5 M7.5 3.5 L3.5 7.5" stroke="#fff" stroke-width="1.1"/></svg></div>
<div class="dtab" style="left:3708px;top:43px;font-size:13px">1374</div>
<div class="ic" style="left:3746px;top:45px"><svg width="11" height="12" viewBox="0 0 11 12"><path d="M0.5 0.5 H10.5 V8 H2 L0.5 11.5Z" fill="#d93025"/><path d="M3.8 2.5 L7.2 6 M7.2 2.5 L3.8 6" stroke="#fff" stroke-width="1"/></svg></div>
<div class="dtab" style="left:3760px;top:43px;font-size:13px">5</div>
<div style="position:absolute;left:3777px;top:42px;width:1px;height:16px;background:#d0d5dd;"></div>
<div class="ic" style="left:3788px;top:42px"><svg width="16" height="16" viewBox="0 0 16 16"><path d="M8 1.2 L9.4 1.4 L9.8 3.2 L11.3 4 L13 3.3 L14 4.5 L13.2 6.2 L13.6 7.8 L15 8.8 L14.6 10.4 L12.8 10.7 L11.9 12.1 L12.4 13.9 L11 14.7 L9.6 13.5 L8 13.6 L6.8 14.9 L5.2 14.3 L5.3 12.5 L4.1 11.4 L2.3 11.6 L1.6 10 L3 8.9 L3 7.2 L1.5 6 L2.3 4.5 L4.1 4.7 L5.3 3.6 L5.2 1.8 L6.7 1.2Z" fill="none" stroke="#474747" stroke-width="1.3"/><circle cx="8" cy="8" r="2.3" fill="#474747"/></svg></div>
<div class="ic" style="left:3822px;top:43px"><svg width="4" height="14" viewBox="0 0 4 14"><circle cx="2" cy="2" r="1.5" fill="#474747"/><circle cx="2" cy="7" r="1.5" fill="#474747"/><circle cx="2" cy="12" r="1.5" fill="#474747"/></svg></div>
<div style="position:absolute;left:1920px;top:64px;width:1920px;height:26px;background:#ffffff;"></div>
<div style="position:absolute;left:1920px;top:90px;width:1920px;height:1px;background:#d3def0;"></div>
<div class="ic" style="left:1929px;top:70px"><svg width="14" height="14" viewBox="0 0 14 14"><circle cx="7" cy="7" r="6.2" fill="none" stroke="#dc362e" stroke-width="1.3"/><rect x="4.3" y="4.3" width="5.4" height="5.4" fill="#dc362e"/></svg></div>
<div class="ic" style="left:1957px;top:70px"><svg width="14" height="14" viewBox="0 0 14 14"><circle cx="7" cy="7" r="6" fill="none" stroke="#474747" stroke-width="1.4"/><path d="M3 11 L11 3" stroke="#474747" stroke-width="1.4"/></svg></div>
<div style="position:absolute;left:1982px;top:69px;width:1px;height:16px;background:#d0d5dd;"></div>
<div class="ic" style="left:1995px;top:71px"><svg width="12" height="12" viewBox="0 0 12 12"><path d="M0 0 H12 L7.3 5.5 V12 H4.7 V5.5Z" fill="#dc362e"/></svg></div>
<div class="ic" style="left:2022px;top:70px"><svg width="14" height="14" viewBox="0 0 14 14"><circle cx="5.8" cy="5.8" r="4.5" fill="none" stroke="#474747" stroke-width="1.5"/><path d="M9 9 L13.3 13.3" stroke="#474747" stroke-width="1.7"/></svg></div>
<div style="position:absolute;left:2047px;top:69px;width:1px;height:16px;background:#d0d5dd;"></div>
<div class="ic" style="left:2058px;top:71px"><svg width="12" height="12" viewBox="0 0 12 12"><rect x="0.6" y="0.6" width="10.8" height="10.8" rx="1.8" fill="#fff" stroke="#5f6368" stroke-width="1.1"/></svg></div>
<div class="dt" style="left:2076px;top:70px;">Preserve log</div>
<div style="position:absolute;left:2153px;top:69px;width:1px;height:16px;background:#d0d5dd;"></div>
<div class="ic" style="left:2164px;top:71px"><svg width="12" height="12" viewBox="0 0 12 12"><rect x="0.6" y="0.6" width="10.8" height="10.8" rx="1.8" fill="#fff" stroke="#5f6368" stroke-width="1.1"/></svg></div>
<div class="dt" style="left:2182px;top:70px;">Disable cache</div>
<div class="dt" style="left:2267.5px;top:70px;">No throttling</div>
<div class="ic" style="left:2352px;top:74px"><svg width="9" height="6" viewBox="0 0 9 6"><path d="M0 0 H9 L4.5 6Z" fill="#474747"/></svg></div>
<div class="ic" style="left:2376px;top:70px"><svg width="17" height="14" viewBox="0 0 17 14"><path d="M1 5 Q8 -1.5 15 5 M3.5 7.5 Q8 3.5 12.5 7.5" fill="none" stroke="#8a8a8a" stroke-width="1.2"/><circle cx="12.5" cy="11" r="2.2" fill="none" stroke="#8a8a8a" stroke-width="1.3"/><path d="M6 11 L8 9.5 M6 11 L8 12.5" fill="none" stroke="#8a8a8a" stroke-width="1"/></svg></div>
<div style="position:absolute;left:2402px;top:69px;width:1px;height:16px;background:#d0d5dd;"></div>
<div class="ic" style="left:2415px;top:70px"><svg width="13" height="14" viewBox="0 0 13 14"><path d="M6.5 10 V2 M2.8 5.5 L6.5 1.5 L10.2 5.5" fill="none" stroke="#474747" stroke-width="1.5"/><path d="M1 10.5 V12.8 H12 V10.5" fill="none" stroke="#474747" stroke-width="1.5"/></svg></div>
<div class="ic" style="left:2443px;top:70px"><svg width="13" height="14" viewBox="0 0 13 14"><path d="M6.5 1 V9 M2.8 5.5 L6.5 9.5 L10.2 5.5" fill="none" stroke="#474747" stroke-width="1.5"/><path d="M1 10.5 V12.8 H12 V10.5" fill="none" stroke="#474747" stroke-width="1.5"/></svg></div>
<div style="position:absolute;left:3803px;top:69px;width:1px;height:16px;background:#d0d5dd;"></div>
<div class="ic" style="left:3814px;top:69px"><svg width="16" height="16" viewBox="0 0 16 16"><path d="M6.6 0.8 H9.4 L9.8 2.8 L11.6 3.8 L13.5 3 L14.9 5.4 L13.4 6.8 V9.2 L14.9 10.6 L13.5 13 L11.6 12.2 L9.8 13.2 L9.4 15.2 H6.6 L6.2 13.2 L4.4 12.2 L2.5 13 L1.1 10.6 L2.6 9.2 V6.8 L1.1 5.4 L2.5 3 L4.4 3.8 L6.2 2.8Z" fill="#1a73e8"/><circle cx="8" cy="8" r="2.4" fill="#fff"/></svg></div>
<div style="position:absolute;left:1920px;top:91px;width:1920px;height:26px;background:#ffffff;"></div>
<div style="position:absolute;left:1920px;top:117px;width:1920px;height:1px;background:#d3def0;"></div>
<div style="position:absolute;left:1924.5px;top:94.5px;width:162px;height:19px;background:#fff;border:1px solid #c7c7c7;border-radius:4px;box-sizing:border-box"></div>
<div class="dt" style="left:1928.5px;top:97px;color:#8a8a8a">Filter</div>
<div class="ic" style="left:2100px;top:98px"><svg width="12" height="12" viewBox="0 0 12 12"><rect x="0.6" y="0.6" width="10.8" height="10.8" rx="1.8" fill="#fff" stroke="#5f6368" stroke-width="1.1"/></svg></div>
<div class="dt" style="left:2118.5px;top:97px;">Invert</div>
<div style="position:absolute;left:2161px;top:96px;width:1px;height:16px;background:#d0d5dd;"></div>
<div class="ic" style="left:2174px;top:98px"><svg width="12" height="12" viewBox="0 0 12 12"><rect x="0.6" y="0.6" width="10.8" height="10.8" rx="1.8" fill="#fff" stroke="#5f6368" stroke-width="1.1"/></svg></div>
<div class="dt" style="left:2192px;top:97px;">Hide data URLs</div>
<div class="ic" style="left:2290px;top:98px"><svg width="12" height="12" viewBox="0 0 12 12"><rect x="0" y="0" width="12" height="12" rx="2" fill="#1a73e8"/><path d="M2.5 6 L5 8.5 L9.5 3.5" fill="none" stroke="#fff" stroke-width="1.6"/></svg></div>
<div class="dt" style="left:2307.5px;top:97px;">Hide extension URLs</div>
<div class="chip" style="left:2430px;width:25.5px">All</div>
<div class="chip" style="left:2464.8px;width:31.3px">Doc</div>
<div class="chip" style="left:2501px;width:23.5px">JS</div>
<div class="chip" style="left:2529.4px;width:66.4px;background:#d3e3fd;border-color:#d3e3fd;color:#0a3a8a">Fetch/XHR</div>
<div class="chip" style="left:2600px;width:30.6px">CSS</div>
<div class="chip" style="left:2635.2px;width:34.4px">Font</div>
<div class="chip" style="left:2674px;width:31.3px">Img</div>
<div class="chip" style="left:2710px;width:42.5px">Media</div>
<div class="chip" style="left:2757.3px;width:55.9px">Manifest</div>
<div class="chip" style="left:2817.8px;width:28.5px">WS</div>
<div class="chip" style="left:2851px;width:41.4px">Wasm</div>
<div class="chip" style="left:2897.1px;width:41.3px">Other</div>
<div style="position:absolute;left:2460.5px;top:96px;width:1px;height:16px;background:#d0d5dd;"></div>
<div class="ic" style="left:2951px;top:98px"><svg width="12" height="12" viewBox="0 0 12 12"><rect x="0.6" y="0.6" width="10.8" height="10.8" rx="1.8" fill="#fff" stroke="#5f6368" stroke-width="1.1"/></svg></div>
<div class="dt" style="left:2969.5px;top:97px;">Blocked response cookies</div>
<div class="ic" style="left:3124px;top:98px"><svg width="12" height="12" viewBox="0 0 12 12"><rect x="0.6" y="0.6" width="10.8" height="10.8" rx="1.8" fill="#fff" stroke="#5f6368" stroke-width="1.1"/></svg></div>
<div class="dt" style="left:3142.4px;top:97px;">Blocked requests</div>
<div class="ic" style="left:3251px;top:98px"><svg width="12" height="12" viewBox="0 0 12 12"><rect x="0.6" y="0.6" width="10.8" height="10.8" rx="1.8" fill="#fff" stroke="#5f6368" stroke-width="1.1"/></svg></div>
<div class="dt" style="left:3269px;top:97px;">3rd-party requests</div>
<div style="position:absolute;left:1920px;top:118px;width:1920px;height:53px;background:#ffffff;"></div>
<div class="ic" style="left:1928px;top:124.8px"><svg width="12" height="12" viewBox="0 0 12 12"><rect x="0.6" y="0.6" width="10.8" height="10.8" rx="1.8" fill="#fff" stroke="#5f6368" stroke-width="1.1"/></svg></div>
<div class="dt" style="left:1946px;top:123.5px;">Big request rows</div>
<div class="ic" style="left:1928px;top:150.8px"><svg width="12" height="12" viewBox="0 0 12 12"><rect x="0" y="0" width="12" height="12" rx="2" fill="#1a73e8"/><path d="M2.5 6 L5 8.5 L9.5 3.5" fill="none" stroke="#fff" stroke-width="1.6"/></svg></div>
<div class="dt" style="left:1946px;top:149.5px;">Overview</div>
<div class="ic" style="left:2888px;top:124.8px"><svg width="12" height="12" viewBox="0 0 12 12"><rect x="0.6" y="0.6" width="10.8" height="10.8" rx="1.8" fill="#fff" stroke="#5f6368" stroke-width="1.1"/></svg></div>
<div class="dt" style="left:2906px;top:123.5px;">Group by frame</div>
<div class="ic" style="left:2888px;top:150.8px"><svg width="12" height="12" viewBox="0 0 12 12"><rect x="0.6" y="0.6" width="10.8" height="10.8" rx="1.8" fill="#fff" stroke="#5f6368" stroke-width="1.1"/></svg></div>
<div class="dt" style="left:2906px;top:149.5px;">Screenshots</div>
<div style="position:absolute;left:1920px;top:170.5px;width:1920px;height:1px;background:#d3def0;"></div>
<div style="position:absolute;left:1920px;top:171.5px;width:1920px;height:80px;background:#ffffff;"></div>
<div style="position:absolute;left:1997px;top:171px;width:1px;height:80px;background:#dde3ee;"></div>
<div class="tml" style="left:1934.5px;top:174.7px">100 ms</div>
<div style="position:absolute;left:2075px;top:171px;width:1px;height:80px;background:#dde3ee;"></div>
<div class="tml" style="left:2012.4px;top:174.7px">200 ms</div>
<div style="position:absolute;left:2153px;top:171px;width:1px;height:80px;background:#dde3ee;"></div>
<div class="tml" style="left:2090.3px;top:174.7px">300 ms</div>
<div style="position:absolute;left:2231px;top:171px;width:1px;height:80px;background:#dde3ee;"></div>
<div class="tml" style="left:2168.3px;top:174.7px">400 ms</div>
<div style="position:absolute;left:2309px;top:171px;width:1px;height:80px;background:#dde3ee;"></div>
<div class="tml" style="left:2246.2px;top:174.7px">500 ms</div>
<div style="position:absolute;left:2387px;top:171px;width:1px;height:80px;background:#dde3ee;"></div>
<div class="tml" style="left:2324.2px;top:174.7px">600 ms</div>
<div style="position:absolute;left:2465px;top:171px;width:1px;height:80px;background:#dde3ee;"></div>
<div class="tml" style="left:2402.2px;top:174.7px">700 ms</div>
<div style="position:absolute;left:2543px;top:171px;width:1px;height:80px;background:#dde3ee;"></div>
<div class="tml" style="left:2480.1px;top:174.7px">800 ms</div>
<div style="position:absolute;left:2621px;top:171px;width:1px;height:80px;background:#dde3ee;"></div>
<div class="tml" style="left:2558.1px;top:174.7px">900 ms</div>
<div style="position:absolute;left:2699px;top:171px;width:1px;height:80px;background:#dde3ee;"></div>
<div class="tml" style="left:2636.0px;top:174.7px">1000 ms</div>
<div style="position:absolute;left:2776px;top:171px;width:1px;height:80px;background:#dde3ee;"></div>
<div class="tml" style="left:2713.9px;top:174.7px">1100 ms</div>
<div style="position:absolute;left:2854px;top:171px;width:1px;height:80px;background:#dde3ee;"></div>
<div class="tml" style="left:2791.9px;top:174.7px">1200 ms</div>
<div style="position:absolute;left:2932px;top:171px;width:1px;height:80px;background:#dde3ee;"></div>
<div class="tml" style="left:2869.8px;top:174.7px">1300 ms</div>
<div style="position:absolute;left:3010px;top:171px;width:1px;height:80px;background:#dde3ee;"></div>
<div class="tml" style="left:2947.8px;top:174.7px">1400 ms</div>
<div style="position:absolute;left:3088px;top:171px;width:1px;height:80px;background:#dde3ee;"></div>
<div class="tml" style="left:3025.8px;top:174.7px">1500 ms</div>
<div style="position:absolute;left:3166px;top:171px;width:1px;height:80px;background:#dde3ee;"></div>
<div class="tml" style="left:3103.7px;top:174.7px">1600 ms</div>
<div style="position:absolute;left:3244px;top:171px;width:1px;height:80px;background:#dde3ee;"></div>
<div class="tml" style="left:3181.7px;top:174.7px">1700 ms</div>
<div style="position:absolute;left:3322px;top:171px;width:1px;height:80px;background:#dde3ee;"></div>
<div class="tml" style="left:3259.6px;top:174.7px">1800 ms</div>
<div style="position:absolute;left:3400px;top:171px;width:1px;height:80px;background:#dde3ee;"></div>
<div class="tml" style="left:3337.6px;top:174.7px">1900 ms</div>
<div style="position:absolute;left:3478px;top:171px;width:1px;height:80px;background:#dde3ee;"></div>
<div class="tml" style="left:3415.5px;top:174.7px">2000 ms</div>
<div style="position:absolute;left:3556px;top:171px;width:1px;height:80px;background:#dde3ee;"></div>
<div class="tml" style="left:3493.4px;top:174.7px">2100 ms</div>
<div style="position:absolute;left:3634px;top:171px;width:1px;height:80px;background:#dde3ee;"></div>
<div class="tml" style="left:3571.4px;top:174.7px">2200 ms</div>
<div style="position:absolute;left:3712px;top:171px;width:1px;height:80px;background:#dde3ee;"></div>
<div class="tml" style="left:3649.4px;top:174.7px">2300 ms</div>
<div style="position:absolute;left:3790px;top:171px;width:1px;height:80px;background:#dde3ee;"></div>
<div class="tml" style="left:3727.3px;top:174.7px">2400 ms</div>
<div style="position:absolute;left:1921px;top:197.5px;width:574px;height:9.5px;background:#f7f9fd;border-top:2px solid #dbe4f4;border-bottom:2.5px solid #dbe4f4;box-sizing:border-box"></div>
<div style="position:absolute;left:2198px;top:199.3px;width:289px;height:5px;background:#33b258;"></div>
<div style="position:absolute;left:2486px;top:199.5px;width:7px;height:5px;background:#4a86e8;"></div>
<div style="position:absolute;left:2196px;top:199.5px;width:3px;height:5px;background:#9aa0a6;"></div>
<div style="position:absolute;left:1920px;top:171px;width:2px;height:80px;background:#a8c1ea;"></div>
<div style="position:absolute;left:1920px;top:172px;width:4px;height:18px;background:#c9d9f3;border-radius:0 3px 3px 0"></div>
<div style="position:absolute;left:3838px;top:171px;width:2px;height:80px;background:#a8c1ea;"></div>
<div style="position:absolute;left:3836px;top:172px;width:4px;height:18px;background:#c9d9f3;border-radius:3px 0 0 3px"></div>
<div style="position:absolute;left:1920px;top:251px;width:1920px;height:1px;background:#d3def0;"></div>
<div style="position:absolute;left:1920px;top:252px;width:371px;height:828px;background:#ffffff;"></div>
<div style="position:absolute;left:1920px;top:252px;width:371px;height:26px;background:#f7f8fc;"></div>
<div class="dtab" style="left:1924px;top:257px;color:#1f1f1f">Name</div>
<div style="position:absolute;left:1920px;top:278px;width:371px;height:22px;background:#e0e2df;"></div>
<div class="ic" style="left:1925.5px;top:283.5px"><svg width="13" height="13" viewBox="0 0 13 13"><circle cx="6.5" cy="6.5" r="6.3" fill="#d93025"/><path d="M4 4 L9 9 M9 4 L4 9" stroke="#fff" stroke-width="1.2"/></svg></div>
<div class="dtab" style="left:1943px;top:281.5px;color:#c5221f">create</div>
<div style="position:absolute;left:1920px;top:1053px;width:371px;height:1px;background:#d3def0;"></div>
<div class="dt" style="left:1930.5px;top:1060px;">1 / 3 requests</div>
<div style="position:absolute;left:2013px;top:1058px;width:1px;height:18px;background:#d0d5dd;"></div>
<div class="dt" style="left:2023.5px;top:1060px;">391 B / 391 B transferred</div>
<div style="position:absolute;left:2169.5px;top:1058px;width:1px;height:18px;background:#d0d5dd;"></div>
<div style="position:absolute;left:2179.5px;top:1055px;width:106px;height:24px;overflow:hidden"><div class="dt" style="left:0;top:5px">183 B / 183 B resources</div></div>
<div style="position:absolute;left:2291px;top:252px;width:1549px;height:828px;background:#ffffff;"></div>
<div style="position:absolute;left:2291px;top:252px;width:1549px;height:26px;background:#edf0f6;"></div>
<div style="position:absolute;left:2291px;top:278px;width:1549px;height:1px;background:#d3def0;"></div>
<div class="ic" style="left:2303.5px;top:259px"><svg width="11" height="11" viewBox="0 0 11 11"><path d="M0.8 0.8 L10.2 10.2 M10.2 0.8 L0.8 10.2" stroke="#474747" stroke-width="1.3"/></svg></div>
<div class="dtab" style="left:2331.8px;top:257px;color:#474747">Headers</div>
<div class="dtab" style="left:2397px;top:257px;color:#0b57d0">Payload</div>
<div class="dtab" style="left:2458.7px;top:257px;color:#474747">Preview</div>
<div class="dtab" style="left:2521.7px;top:257px;color:#474747">Response</div>
<div class="dtab" style="left:2593.6px;top:257px;color:#474747">Initiator</div>
<div class="dtab" style="left:2656.8px;top:257px;color:#474747">Timing</div>
<div class="dtab" style="left:2713.6px;top:257px;color:#474747">Cookies</div>
<div style="position:absolute;left:2387.3px;top:277px;width:61.5px;height:2px;background:#0b57d0;"></div>
<div class="ic" style="left:2300.5px;top:291px"><svg width="7.5" height="7" viewBox="0 0 7.5 7"><path d="M0 0 H7.5 L3.75 7Z" fill="#1f1f1f"/></svg></div>
<div class="dtb" style="left:2309.5px;top:287px;">Request Payload</div>
<div class="dtab" style="left:2434.8px;top:287px;color:#1f1f1f">view source</div>
<div style="position:absolute;left:2291px;top:306.5px;width:1549px;height:20px;background:#f1f1f1;"></div>
<div style="position:absolute;left:2323px;top:306.5px;width:53px;height:20px;background:#d5e2f6;"></div>
<div class="ic" style="left:2311px;top:313px"><svg width="8" height="7" viewBox="0 0 8 7"><path d="M0 0 H8 L4 7Z" fill="#333"/></svg></div>
<div class="mono" style="left:2323.5px;top:309px;color:#303030">{title: "test12", description: "&lt;p&gt;this is my first product&lt;/p&gt;",…}</div>
<div class="mono" style="left:2327.3px;top:327.8px"><span style="color:#7f1f63">bought_with_products</span><span style="color:#303030">: </span><span style="color:#303030">[]</span></div>
<div class="mono" style="left:2327.3px;top:344.7px"><span style="color:#7f1f63">categories</span><span style="color:#303030">: </span><span style="color:#1a4fa0">9</span></div>
<div class="mono" style="left:2327.3px;top:361.7px"><span style="color:#7f1f63">continueSelling</span><span style="color:#303030">: </span><span style="color:#1a4fa0">0</span></div>
<div class="mono" style="left:2327.3px;top:378.6px"><span style="color:#7f1f63">cost_per_item</span><span style="color:#303030">: </span><span style="color:#c03a23">""</span></div>
<div class="mono" style="left:2327.3px;top:395.6px"><span style="color:#7f1f63">deleted_medias</span><span style="color:#303030">: </span><span style="color:#303030">[]</span></div>
<div class="mono" style="left:2327.3px;top:412.5px"><span style="color:#7f1f63">description</span><span style="color:#303030">: </span><span style="color:#c03a23">"&lt;p&gt;this is my first product&lt;/p&gt;"</span></div>
<div class="mono" style="left:2327.3px;top:429.5px"><span style="color:#7f1f63">digital_files_ids</span><span style="color:#303030">: </span><span style="color:#303030">[]</span></div>
<div class="mono" style="left:2327.3px;top:446.4px"><span style="color:#7f1f63">featured_image_id</span><span style="color:#303030">: </span><span style="color:#1a4fa0">30409</span></div>
<div class="mono" style="left:2327.3px;top:463.4px"><span style="color:#7f1f63">gallery_id</span><span style="color:#303030">: </span><span style="color:#1a4fa0">6559</span></div>
<div class="mono" style="left:2327.3px;top:480.3px"><span style="color:#7f1f63">handmade</span><span style="color:#303030">: </span><span style="color:#1a4fa0">0</span></div>
<div class="mono" style="left:2327.3px;top:497.3px"><span style="color:#7f1f63">hasProductOptions</span><span style="color:#303030">: </span><span style="color:#1a4fa0">false</span></div>
<div class="mono" style="left:2327.3px;top:514.2px"><span style="color:#7f1f63">hasVariants</span><span style="color:#303030">: </span><span style="color:#1a4fa0">false</span></div>
<div class="mono" style="left:2327.3px;top:531.2px"><span style="color:#7f1f63">hash</span><span style="color:#303030">: </span><span style="color:#c03a23">"A68079T"</span></div>
<div class="mono" style="left:2327.3px;top:548.1px"><span style="color:#7f1f63">importStatus</span><span style="color:#303030">: </span><span style="color:#1a4fa0">0</span></div>
<div class="mono" style="left:2327.3px;top:565.1px"><span style="color:#7f1f63">is_online_channel</span><span style="color:#303030">: </span><span style="color:#1a4fa0">false</span></div>
<div class="mono" style="left:2327.3px;top:582.0px"><span style="color:#7f1f63">is_personalization</span><span style="color:#303030">: </span><span style="color:#1a4fa0">0</span></div>
<div class="mono" style="left:2327.3px;top:599.0px"><span style="color:#7f1f63">is_seller</span><span style="color:#303030">: </span><span style="color:#1a4fa0">true</span></div>
<div class="mono" style="left:2327.3px;top:615.9px"><span style="color:#7f1f63">made_to_order</span><span style="color:#303030">: </span><span style="color:#1a4fa0">0</span></div>
<div class="ic" style="left:2321.5px;top:637.0px"><svg width="6" height="8" viewBox="0 0 6 8"><path d="M0 0 L6 4 L0 8Z" fill="#333"/></svg></div>
<div class="mono" style="left:2332.8px;top:632.9px"><span style="color:#7f1f63">media_gallery</span><span style="color:#303030">: [{id: 30409, alt: "image (1).png"}]</span></div>
<div class="mono" style="left:2327.3px;top:649.9px"><span style="color:#7f1f63">personalization_description</span><span style="color:#303030">: </span><span style="color:#c03a23">""</span></div>
<div class="mono" style="left:2327.3px;top:666.8px"><span style="color:#7f1f63">personalization_optional</span><span style="color:#303030">: </span><span style="color:#1a4fa0">0</span></div>
<div class="mono" style="left:2327.3px;top:683.7px"><span style="color:#7f1f63">price</span><span style="color:#303030">: </span><span style="color:#c03a23">"10"</span></div>
<div class="mono" style="left:2327.3px;top:700.7px"><span style="color:#7f1f63">processing_time</span><span style="color:#303030">: </span><span style="color:#1a4fa0">5</span></div>
<div class="mono" style="left:2327.3px;top:717.6px"><span style="color:#7f1f63">product_options</span><span style="color:#303030">: </span><span style="color:#303030">[]</span></div>
<div class="mono" style="left:2327.3px;top:734.6px"><span style="color:#7f1f63">quantity</span><span style="color:#303030">: </span><span style="color:#1a4fa0">2000</span></div>
<div class="mono" style="left:2327.3px;top:751.5px"><span style="color:#7f1f63">seo_description</span><span style="color:#303030">: </span><span style="color:#c03a23">"this is my first product"</span></div>
<div class="mono" style="left:2327.3px;top:768.5px"><span style="color:#7f1f63">seo_title</span><span style="color:#303030">: </span><span style="color:#c03a23">"test12"</span></div>
<div class="mono" style="left:2327.3px;top:785.4px"><span style="color:#7f1f63">short_description</span><span style="color:#303030">: </span><span style="color:#c03a23">"&lt;ul&gt;&lt;li&gt;testing product&lt;/li&gt;&lt;/ul&gt;"</span></div>
<div class="mono" style="left:2327.3px;top:802.4px"><span style="color:#7f1f63">status</span><span style="color:#303030">: </span><span style="color:#1a4fa0">1</span></div>
<div class="mono" style="left:2327.3px;top:819.3px"><span style="color:#7f1f63">tags</span><span style="color:#303030">: </span><span style="color:#303030">[]</span></div>
<div class="mono" style="left:2327.3px;top:836.3px"><span style="color:#7f1f63">title</span><span style="color:#303030">: </span><span style="color:#c03a23">"test12"</span></div>
<div class="mono" style="left:2327.3px;top:853.2px"><span style="color:#7f1f63">type</span><span style="color:#303030">: </span><span style="color:#c03a23">"simple"</span></div>
<div class="mono" style="left:2327.3px;top:870.2px"><span style="color:#7f1f63">variants</span><span style="color:#303030">: </span><span style="color:#303030">[]</span></div>
<div class="mono" style="left:2327.3px;top:887.1px"><span style="color:#7f1f63">vendor</span><span style="color:#303030">: </span><span style="color:#c03a23">"CreateConfidence"</span></div>
<div class="mono" style="left:2327.3px;top:904.1px"><span style="color:#7f1f63">video_thumbnail</span><span style="color:#303030">: </span><span style="color:#c03a23">""</span></div>
<div class="mono" style="left:2327.3px;top:921.0px"><span style="color:#7f1f63">video_url</span><span style="color:#303030">: </span><span style="color:#c03a23">""</span></div>
<div class="mono" style="left:2327.3px;top:938.0px"><span style="color:#7f1f63">zone_id</span><span style="color:#303030">: </span><span style="color:#1a4fa0">81</span></div>
<div class="ic" style="left:2321.5px;top:959.05px"><svg width="6" height="8" viewBox="0 0 6 8"><path d="M0 0 L6 4 L0 8Z" fill="#333"/></svg></div>
<div class="mono" style="left:2332.8px;top:954.9px"><span style="color:#7f1f63">_gallery_images</span><span style="color:#303030">: [{id: 30409,…}]</span></div>
<div class="mono" style="left:2327.3px;top:971.9px"><span style="color:#7f1f63">_media_gallery</span><span style="color:#303030">: </span><span style="color:#303030">[]</span></div>
<div style="position:absolute;left:2291px;top:992.5px;width:1549px;height:1px;background:#d3def0;"></div>
<div style="position:absolute;left:2291px;top:252px;width:1px;height:828px;background:#d3def0;"></div>
</body></html>
